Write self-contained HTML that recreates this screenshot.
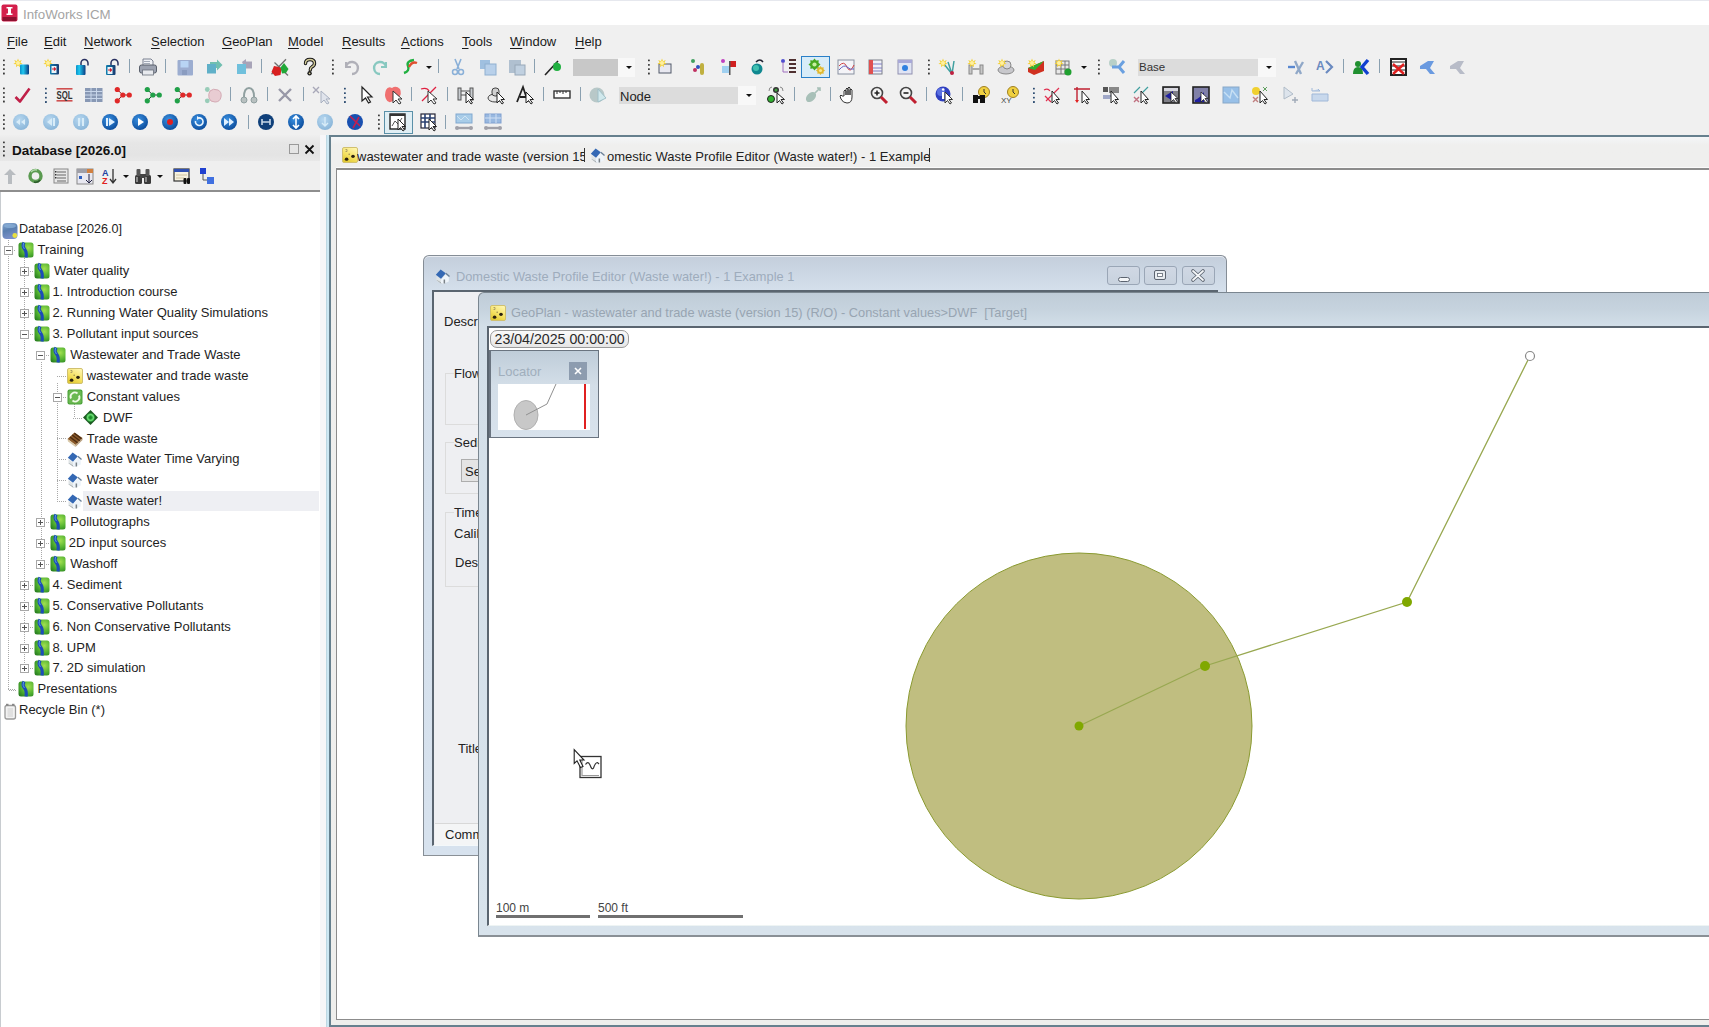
<!DOCTYPE html><html><head><meta charset="utf-8"><style>
html,body{margin:0;padding:0;width:1709px;height:1027px;overflow:hidden;background:#f0f0f0;font-family:"Liberation Sans", sans-serif;}
.t{position:absolute;white-space:nowrap;line-height:1;}
svg{display:block}
</style></head><body>
<svg width="0" height="0" style="position:absolute"><defs><linearGradient id="gcyl" x1="0" x2="1" y1="0" y2="0"><stop offset="0" stop-color="#0a90c8"/><stop offset="0.35" stop-color="#20c8f0"/><stop offset="1" stop-color="#0a3a80"/></linearGradient><linearGradient id="gcyl2" x1="0" x2="1" y1="0" y2="0"><stop offset="0" stop-color="#1080b0"/><stop offset="1" stop-color="#1a3a70"/></linearGradient><radialGradient id="gcirc" cx="0.4" cy="0.35" r="0.7"><stop offset="0" stop-color="#3a90e0"/><stop offset="1" stop-color="#0a4a9a"/></radialGradient><radialGradient id="gcircl" cx="0.4" cy="0.35" r="0.7"><stop offset="0" stop-color="#b8d8f0"/><stop offset="1" stop-color="#88b4d8"/></radialGradient><radialGradient id="gfold" cx="0.65" cy="0.35" r="0.8"><stop offset="0" stop-color="#a0e050"/><stop offset="0.6" stop-color="#50b030"/><stop offset="1" stop-color="#2a8020"/></radialGradient><linearGradient id="ggeo" x1="0.8" y1="0" x2="0.3" y2="1"><stop offset="0" stop-color="#fff6b0"/><stop offset="0.6" stop-color="#f4e060"/><stop offset="1" stop-color="#e0c830"/></linearGradient><linearGradient id="gdb" x1="0" y1="0" x2="0.3" y2="1"><stop offset="0" stop-color="#88a8d0"/><stop offset="0.5" stop-color="#5a7fb0"/><stop offset="1" stop-color="#7a90c8"/></linearGradient></defs></svg>
<div style="position:absolute;left:0px;top:0px;width:1709px;height:25px;background:#ffffff;"></div>
<div style="position:absolute;left:0px;top:0px;width:1709px;height:1px;background:#e6e8ee;"></div>
<svg style="position:absolute;left:1px;top:4px;overflow:visible;" width="17" height="18" viewBox="0 0 17 18"><rect x="0.5" y="0.5" width="16" height="17" rx="2" fill="#d4204c"/><rect x="1.5" y="13" width="14" height="4" fill="#8e1030"/><rect x="7" y="3" width="3" height="8" fill="#fff"/><rect x="5.5" y="3" width="6" height="1.5" fill="#fff"/><rect x="5.5" y="9.5" width="6" height="1.5" fill="#fff"/></svg>
<div class="t" style="left:23px;top:7.5px;font-size:13.3px;color:#a4a4a4;font-weight:400;">InfoWorks ICM</div>
<div class="t" style="left:7px;top:35px;font-size:13px;color:#1a1a1a;"><span style="text-decoration:underline;text-underline-offset:2px;text-decoration-thickness:1px">F</span>ile</div>
<div class="t" style="left:44px;top:35px;font-size:13px;color:#1a1a1a;"><span style="text-decoration:underline;text-underline-offset:2px;text-decoration-thickness:1px">E</span>dit</div>
<div class="t" style="left:84px;top:35px;font-size:13px;color:#1a1a1a;"><span style="text-decoration:underline;text-underline-offset:2px;text-decoration-thickness:1px">N</span>etwork</div>
<div class="t" style="left:151px;top:35px;font-size:13px;color:#1a1a1a;"><span style="text-decoration:underline;text-underline-offset:2px;text-decoration-thickness:1px">S</span>election</div>
<div class="t" style="left:222px;top:35px;font-size:13px;color:#1a1a1a;"><span style="text-decoration:underline;text-underline-offset:2px;text-decoration-thickness:1px">G</span>eoPlan</div>
<div class="t" style="left:288px;top:35px;font-size:13px;color:#1a1a1a;"><span style="text-decoration:underline;text-underline-offset:2px;text-decoration-thickness:1px">M</span>odel</div>
<div class="t" style="left:342px;top:35px;font-size:13px;color:#1a1a1a;"><span style="text-decoration:underline;text-underline-offset:2px;text-decoration-thickness:1px">R</span>esults</div>
<div class="t" style="left:401px;top:35px;font-size:13px;color:#1a1a1a;"><span style="text-decoration:underline;text-underline-offset:2px;text-decoration-thickness:1px">A</span>ctions</div>
<div class="t" style="left:462px;top:35px;font-size:13px;color:#1a1a1a;"><span style="text-decoration:underline;text-underline-offset:2px;text-decoration-thickness:1px">T</span>ools</div>
<div class="t" style="left:510px;top:35px;font-size:13px;color:#1a1a1a;"><span style="text-decoration:underline;text-underline-offset:2px;text-decoration-thickness:1px">W</span>indow</div>
<div class="t" style="left:575px;top:35px;font-size:13px;color:#1a1a1a;"><span style="text-decoration:underline;text-underline-offset:2px;text-decoration-thickness:1px">H</span>elp</div>
<div style="position:absolute;left:801px;top:56px;width:29px;height:22px;background:#d8ecf8;border:1px solid #2a80c8;box-sizing:border-box;"></div>
<svg style="position:absolute;left:1px;top:58px;overflow:visible;" width="18" height="18" viewBox="0 0 18 18"><g fill="#3a3a3a"><rect x="2" y="1.4" width="1.8" height="1.8" rx="0.5"/><rect x="2" y="5.8999999999999995" width="1.8" height="1.8" rx="0.5"/><rect x="2" y="10.2" width="1.8" height="1.8" rx="0.5"/><rect x="2" y="14.6" width="1.8" height="1.8" rx="0.5"/></g></svg>
<svg style="position:absolute;left:13px;top:58px;overflow:visible;" width="18" height="18" viewBox="0 0 18 18"><path d="M5 0.5 L6 3.2 L8.8 2 L7.3 4.6 L9.6 6 L6.8 6.3 L6.9 9.2 L5 7.2 L3.1 9.2 L3.2 6.3 L0.4 6 L2.7 4.6 L1.2 2 L4 3.2z" fill="#f4d030"/><circle cx="5" cy="5" r="2" fill="#fff0a0"/><rect x="7" y="6.5" width="9" height="10" rx="1" fill="url(#gcyl)"/></svg>
<svg style="position:absolute;left:43px;top:58px;overflow:visible;" width="18" height="18" viewBox="0 0 18 18"><path d="M5 0.5 L6 3.2 L8.8 2 L7.3 4.6 L9.6 6 L6.8 6.3 L6.9 9.2 L5 7.2 L3.1 9.2 L3.2 6.3 L0.4 6 L2.7 4.6 L1.2 2 L4 3.2z" fill="#f4d030"/><circle cx="5" cy="5" r="2" fill="#fff0a0"/><rect x="7" y="6" width="9" height="10.5" rx="1" fill="url(#gcyl2)"/><rect x="8.5" y="8" width="5" height="7" fill="#e8f4fa"/><path d="M9 11 h3.5 M11 9.5 l1.5 1.5 l-1.5 1.5" stroke="#d02030" stroke-width="1.2" fill="none"/></svg>
<svg style="position:absolute;left:76px;top:58px;overflow:visible;" width="18" height="18" viewBox="0 0 18 18"><rect x="0" y="7" width="9.5" height="10" rx="1" fill="url(#gcyl)"/><path d="M5 7 V5 a3.5 3.5 0 0 1 7 0 V7.5" fill="none" stroke="#283060" stroke-width="1.5"/></svg>
<svg style="position:absolute;left:106px;top:58px;overflow:visible;" width="18" height="18" viewBox="0 0 18 18"><rect x="0" y="7" width="9.5" height="10" rx="1" fill="url(#gcyl2)"/><rect x="1.5" y="9" width="5" height="7" fill="#e8f4fa"/><path d="M2 12 h3.5 M4 10.5 l1.5 1.5 l-1.5 1.5" stroke="#d02030" stroke-width="1.2" fill="none"/><path d="M5 7 V5 a3.5 3.5 0 0 1 7 0 V7.5" fill="none" stroke="#283060" stroke-width="1.5"/></svg>
<svg style="position:absolute;left:129px;top:58px;overflow:visible;" width="18" height="18" viewBox="0 0 18 18"><rect x="0" y="1" width="1" height="14" fill="#8aa0b0"/></svg>
<svg style="position:absolute;left:139px;top:58px;overflow:visible;" width="18" height="18" viewBox="0 0 18 18"><path d="M4 1 h8 l2 2 v5 h-10z" fill="#f0f2f6" stroke="#7a8090"/><rect x="0.5" y="7" width="17" height="8" rx="2" fill="#9ca2b0" stroke="#5a606c"/><rect x="3.5" y="12" width="11" height="5" fill="#e8eaee" stroke="#6a707c" stroke-width="0.8"/><path d="M5 3.5 h6 M5 5.5 h6" stroke="#9098a8" stroke-width="0.8"/></svg>
<svg style="position:absolute;left:165px;top:58px;overflow:visible;" width="18" height="18" viewBox="0 0 18 18"><rect x="0" y="1" width="1" height="14" fill="#8aa0b0"/></svg>
<svg style="position:absolute;left:177px;top:58px;overflow:visible;" width="18" height="18" viewBox="0 0 18 18"><rect x="0.5" y="2" width="15.5" height="15.5" rx="1" fill="#9cadd0"/><rect x="3.5" y="3" width="8" height="6.5" fill="#b8d4f4"/><rect x="5" y="12" width="5" height="5" fill="#8a9cc0"/></svg>
<svg style="position:absolute;left:207px;top:58px;overflow:visible;" width="18" height="18" viewBox="0 0 18 18"><path d="M3 4 h7 V1.5 l5.5 5.5 l-5.5 5.5 V10 h-7z" fill="#70bfb0"/><rect x="0" y="6" width="9" height="9.5" fill="#60b0c8"/></svg>
<svg style="position:absolute;left:236px;top:58px;overflow:visible;" width="18" height="18" viewBox="0 0 18 18"><path d="M6 4 l4 -3 v2.5 h6 v7 h-6 V13z" fill="#a8a4b8"/><rect x="1" y="6" width="9" height="10" fill="#70c0dc"/></svg>
<svg style="position:absolute;left:261px;top:58px;overflow:visible;" width="18" height="18" viewBox="0 0 18 18"><rect x="0" y="1" width="1" height="14" fill="#8aa0b0"/></svg>
<svg style="position:absolute;left:271px;top:58px;overflow:visible;" width="18" height="18" viewBox="0 0 18 18"><path d="M3.5 4.5 L17 17.5 M15 1.2 L0.5 16.3" stroke="#707070" stroke-width="1.3"/><path d="M0.5 14 L3 8 L8 9 L10.5 11 L9.5 17 L4 18z" fill="#d82020"/><path d="M9.5 9.5 L13 5 L17.5 11 L15 15 L11 15.5z" fill="#20a838"/></svg>
<svg style="position:absolute;left:301px;top:58px;overflow:visible;" width="18" height="18" viewBox="0 0 18 18"><path d="M4.5 5.5 q0 -4 4.5 -4 q4.5 0 4.5 3.8 q0 2.4 -2.6 3.6 q-1.6 .8 -1.6 3" fill="none" stroke="#1a1a1a" stroke-width="3.4" stroke-linecap="round"/><path d="M4.5 5.5 q0 -4 4.5 -4 q4.5 0 4.5 3.8 q0 2.4 -2.6 3.6 q-1.6 .8 -1.6 3" fill="none" stroke="#d4cc98" stroke-width="1.4" stroke-linecap="round"/><circle cx="8.6" cy="15.3" r="2.2" fill="#1a1a1a"/><circle cx="8.6" cy="15.3" r="0.9" fill="#d4cc98"/></svg>
<svg style="position:absolute;left:330px;top:58px;overflow:visible;" width="18" height="18" viewBox="0 0 18 18"><g fill="#3a3a3a"><rect x="2" y="1.4" width="1.8" height="1.8" rx="0.5"/><rect x="2" y="5.8999999999999995" width="1.8" height="1.8" rx="0.5"/><rect x="2" y="10.2" width="1.8" height="1.8" rx="0.5"/><rect x="2" y="14.6" width="1.8" height="1.8" rx="0.5"/></g></svg>
<svg style="position:absolute;left:342px;top:58px;overflow:visible;" width="18" height="18" viewBox="0 0 18 18"><path d="M4 4 v5 h5" fill="none" stroke="#b0b0b8" stroke-width="2"/><path d="M4 9 a6 6 0 1 1 6 7" fill="none" stroke="#b0b0b8" stroke-width="2.4"/></svg>
<svg style="position:absolute;left:372px;top:58px;overflow:visible;" width="18" height="18" viewBox="0 0 18 18"><path d="M14 4 v5 h-5" fill="none" stroke="#88c8c0" stroke-width="2"/><path d="M14 9 a6 6 0 1 0 -6 7" fill="none" stroke="#88c8c0" stroke-width="2.4"/></svg>
<svg style="position:absolute;left:401px;top:58px;overflow:visible;" width="18" height="18" viewBox="0 0 18 18"><path d="M3 15 q6 -2 4 -7 q-2 -5 6 -6" fill="none" stroke="#20b040" stroke-width="2.4"/><path d="M8 9 q3 -6 8 -4" fill="none" stroke="#e05030" stroke-width="2.4"/></svg>
<svg style="position:absolute;left:424px;top:58px;overflow:visible;" width="18" height="18" viewBox="0 0 18 18"><path d="M2 8 h6 l-3 3z" fill="#111"/></svg>
<svg style="position:absolute;left:438px;top:58px;overflow:visible;" width="18" height="18" viewBox="0 0 18 18"><rect x="0" y="1" width="1" height="14" fill="#8aa0b0"/></svg>
<svg style="position:absolute;left:449px;top:58px;overflow:visible;" width="18" height="18" viewBox="0 0 18 18"><path d="M6 1 l4 10 M12 1 l-4 10" stroke="#8ab0d8" stroke-width="1.6"/><circle cx="6" cy="14" r="2.5" fill="none" stroke="#8ab0d8" stroke-width="1.5"/><circle cx="12" cy="14" r="2.5" fill="none" stroke="#8ab0d8" stroke-width="1.5"/></svg>
<svg style="position:absolute;left:479px;top:58px;overflow:visible;" width="18" height="18" viewBox="0 0 18 18"><rect x="1" y="2" width="10" height="9" fill="#a0c0e0"/><rect x="6" y="6" width="11" height="11" fill="#b8d0ea" stroke="#90b0d0"/></svg>
<svg style="position:absolute;left:508px;top:58px;overflow:visible;" width="18" height="18" viewBox="0 0 18 18"><rect x="1" y="2" width="12" height="13" fill="#b0c0d0"/><rect x="7" y="7" width="10" height="10" fill="#c0d0e0" stroke="#98a8b8"/></svg>
<svg style="position:absolute;left:534px;top:58px;overflow:visible;" width="18" height="18" viewBox="0 0 18 18"><rect x="0" y="1" width="1" height="14" fill="#8aa0b0"/></svg>
<svg style="position:absolute;left:544px;top:58px;overflow:visible;" width="18" height="18" viewBox="0 0 18 18"><path d="M1 17 L14 3" stroke="#222" stroke-width="1.6"/><circle cx="13" cy="9" r="4" fill="#20b040"/><path d="M9 6 l4 -2 l3 3z" fill="#20b040"/></svg>
<svg style="position:absolute;left:646px;top:58px;overflow:visible;" width="18" height="18" viewBox="0 0 18 18"><g fill="#3a3a3a"><rect x="2" y="1.4" width="1.8" height="1.8" rx="0.5"/><rect x="2" y="5.8999999999999995" width="1.8" height="1.8" rx="0.5"/><rect x="2" y="10.2" width="1.8" height="1.8" rx="0.5"/><rect x="2" y="14.6" width="1.8" height="1.8" rx="0.5"/></g></svg>
<svg style="position:absolute;left:657px;top:58px;overflow:visible;" width="18" height="18" viewBox="0 0 18 18"><rect x="2" y="6" width="12" height="9" fill="#e8e8f0" stroke="#505868"/><path d="M5 0.5 L6 3.2 L8.8 2 L7.3 4.6 L9.6 6 L6.8 6.3 L6.9 9.2 L5 7.2 L3.1 9.2 L3.2 6.3 L0.4 6 L2.7 4.6 L1.2 2 L4 3.2z" fill="#f4d030"/><circle cx="5" cy="5" r="2" fill="#fff0a0"/></svg>
<svg style="position:absolute;left:689px;top:58px;overflow:visible;" width="18" height="18" viewBox="0 0 18 18"><circle cx="4" cy="3" r="2" fill="#40a060"/><circle cx="6" cy="12" r="2" fill="#c03060"/><circle cx="9" cy="9" r="2" fill="#3050c0"/><rect x="11" y="5" width="4" height="12" rx="2" fill="#c0b040"/></svg>
<svg style="position:absolute;left:719px;top:58px;overflow:visible;" width="18" height="18" viewBox="0 0 18 18"><circle cx="4" cy="3" r="2" fill="#c040c0"/><rect x="3" y="8" width="7" height="7" fill="#a0d0f0"/><path d="M11 3 h6 v6 h-6z" fill="#d02020"/><rect x="10" y="3" width="1.5" height="14" fill="#555"/></svg>
<svg style="position:absolute;left:747px;top:58px;overflow:visible;" width="18" height="18" viewBox="0 0 18 18"><circle cx="10" cy="11" r="5.5" fill="#108890"/><circle cx="9" cy="10" r="3" fill="#40c0b0"/><path d="M9 4 q4 -4 7 0" fill="none" stroke="#223" stroke-width="1.6"/></svg>
<svg style="position:absolute;left:779px;top:58px;overflow:visible;" width="18" height="18" viewBox="0 0 18 18"><circle cx="4" cy="3" r="2" fill="#5050d0"/><path d="M4 4 v10 h5" stroke="#a070c0" fill="none"/><path d="M10 2 h7 M10 6 h7 M10 10 h7 M10 14 h7" stroke="#503030" stroke-width="2"/></svg>
<svg style="position:absolute;left:808px;top:58px;overflow:visible;" width="18" height="18" viewBox="0 0 18 18"><polygon points="12.50,6.50 10.49,8.15 10.74,10.74 8.15,10.49 6.50,12.50 4.85,10.49 2.26,10.74 2.51,8.15 0.50,6.50 2.51,4.85 2.26,2.26 4.85,2.51 6.50,0.50 8.15,2.51 10.74,2.26 10.49,4.85" fill="#48a820"/><circle cx="6.5" cy="6.5" r="2.10" fill="#c8f0a0"/><polygon points="17.00,12.50 15.49,13.74 15.68,15.68 13.74,15.49 12.50,17.00 11.26,15.49 9.32,15.68 9.51,13.74 8.00,12.50 9.51,11.26 9.32,9.32 11.26,9.51 12.50,8.00 13.74,9.51 15.68,9.32 15.49,11.26" fill="#e0b830"/><circle cx="12.5" cy="12.5" r="1.57" fill="#f8e890"/></svg>
<svg style="position:absolute;left:837px;top:58px;overflow:visible;" width="18" height="18" viewBox="0 0 18 18"><rect x="1" y="2" width="16" height="14" fill="#f4f4f8" stroke="#8890a0"/><path d="M2 8 q5 -6 8 1 t7 -2" stroke="#d04040" fill="none"/><path d="M2 12 q5 -6 8 -3 t7 2" stroke="#6060c0" fill="none"/></svg>
<svg style="position:absolute;left:867px;top:58px;overflow:visible;" width="18" height="18" viewBox="0 0 18 18"><rect x="2" y="2" width="13" height="14" fill="#f0f0f8" stroke="#7a7f8a"/><rect x="2" y="2" width="4" height="14" fill="#e05050"/><path d="M6 6 h9 M6 10 h9 M6 13 h9" stroke="#8080c0"/></svg>
<svg style="position:absolute;left:896px;top:58px;overflow:visible;" width="18" height="18" viewBox="0 0 18 18"><rect x="2" y="2" width="14" height="14" fill="#e0e4f4" stroke="#9090b0"/><rect x="2" y="2" width="14" height="3" fill="#a8a8d8"/><circle cx="9" cy="10" r="3" fill="#3080e0"/></svg>
<svg style="position:absolute;left:926px;top:58px;overflow:visible;" width="18" height="18" viewBox="0 0 18 18"><g fill="#3a3a3a"><rect x="2" y="1.4" width="1.8" height="1.8" rx="0.5"/><rect x="2" y="5.8999999999999995" width="1.8" height="1.8" rx="0.5"/><rect x="2" y="10.2" width="1.8" height="1.8" rx="0.5"/><rect x="2" y="14.6" width="1.8" height="1.8" rx="0.5"/></g></svg>
<svg style="position:absolute;left:938px;top:58px;overflow:visible;" width="18" height="18" viewBox="0 0 18 18"><path d="M6 6 L14 16 M10 4 L14 16 M16 3 L14 16" stroke="#40a0a0" stroke-width="1.5"/><circle cx="14" cy="15" r="2" fill="#c02040"/><path d="M5 0.5 L6 3.2 L8.8 2 L7.3 4.6 L9.6 6 L6.8 6.3 L6.9 9.2 L5 7.2 L3.1 9.2 L3.2 6.3 L0.4 6 L2.7 4.6 L1.2 2 L4 3.2z" fill="#f4d030"/><circle cx="5" cy="5" r="2" fill="#fff0a0"/></svg>
<svg style="position:absolute;left:967px;top:58px;overflow:visible;" width="18" height="18" viewBox="0 0 18 18"><rect x="2" y="7" width="3" height="9" fill="#c8c8c8" stroke="#888"/><rect x="13" y="7" width="3" height="9" fill="#c8c8c8" stroke="#888"/><rect x="4" y="10" width="10" height="2" fill="#aaa"/><path d="M5 0.5 L6 3.2 L8.8 2 L7.3 4.6 L9.6 6 L6.8 6.3 L6.9 9.2 L5 7.2 L3.1 9.2 L3.2 6.3 L0.4 6 L2.7 4.6 L1.2 2 L4 3.2z" fill="#f4d030"/><circle cx="5" cy="5" r="2" fill="#fff0a0"/></svg>
<svg style="position:absolute;left:997px;top:58px;overflow:visible;" width="18" height="18" viewBox="0 0 18 18"><ellipse cx="9" cy="12" rx="8" ry="4" fill="#c8c8cc" stroke="#888"/><ellipse cx="10" cy="7" rx="4" ry="4" fill="#d8d8dc" stroke="#888"/><path d="M5 0.5 L6 3.2 L8.8 2 L7.3 4.6 L9.6 6 L6.8 6.3 L6.9 9.2 L5 7.2 L3.1 9.2 L3.2 6.3 L0.4 6 L2.7 4.6 L1.2 2 L4 3.2z" fill="#f4d030"/><circle cx="5" cy="5" r="2" fill="#fff0a0"/></svg>
<svg style="position:absolute;left:1027px;top:58px;overflow:visible;" width="18" height="18" viewBox="0 0 18 18"><path d="M1 10 L17 3 L17 13 L7 17 L1 14z" fill="#d03020"/><path d="M1 10 L17 3 L8 12z" fill="#30b030"/><path d="M5 0.5 L6 3.2 L8.8 2 L7.3 4.6 L9.6 6 L6.8 6.3 L6.9 9.2 L5 7.2 L3.1 9.2 L3.2 6.3 L0.4 6 L2.7 4.6 L1.2 2 L4 3.2z" fill="#f4d030"/><circle cx="5" cy="5" r="2" fill="#fff0a0"/></svg>
<svg style="position:absolute;left:1054px;top:58px;overflow:visible;" width="18" height="18" viewBox="0 0 18 18"><rect x="2" y="3" width="13" height="13" fill="#e8e8e8" stroke="#777"/><path d="M2 7 h13 M2 11 h13 M7 3 v13 M11 3 v13" stroke="#777"/><circle cx="14" cy="14" r="3.5" fill="#20a030"/><path d="M5 0.5 L6 3.2 L8.8 2 L7.3 4.6 L9.6 6 L6.8 6.3 L6.9 9.2 L5 7.2 L3.1 9.2 L3.2 6.3 L0.4 6 L2.7 4.6 L1.2 2 L4 3.2z" fill="#f4d030"/><circle cx="5" cy="5" r="2" fill="#fff0a0"/></svg>
<svg style="position:absolute;left:1079px;top:58px;overflow:visible;" width="18" height="18" viewBox="0 0 18 18"><path d="M2 8 h6 l-3 3z" fill="#111"/></svg>
<svg style="position:absolute;left:1096px;top:58px;overflow:visible;" width="18" height="18" viewBox="0 0 18 18"><g fill="#3a3a3a"><rect x="2" y="1.4" width="1.8" height="1.8" rx="0.5"/><rect x="2" y="5.8999999999999995" width="1.8" height="1.8" rx="0.5"/><rect x="2" y="10.2" width="1.8" height="1.8" rx="0.5"/><rect x="2" y="14.6" width="1.8" height="1.8" rx="0.5"/></g></svg>
<svg style="position:absolute;left:1108px;top:58px;overflow:visible;" width="18" height="18" viewBox="0 0 18 18"><circle cx="5" cy="5" r="4" fill="#b8d0c8"/><path d="M4 9 L11 9 L16 3 M11 9 L16 15" stroke="#6aa0e0" stroke-width="3" fill="none"/></svg>
<svg style="position:absolute;left:1287px;top:58px;overflow:visible;" width="18" height="18" viewBox="0 0 18 18"><path d="M1 9 h7" stroke="#5a88d0" stroke-width="2.4"/><path d="M8 3 l6 13 M9 16 l7 -12" stroke="#90a8c8" stroke-width="2.4"/></svg>
<svg style="position:absolute;left:1316px;top:58px;overflow:visible;" width="18" height="18" viewBox="0 0 18 18"><text x="0" y="12" font-size="12" font-weight="700" fill="#6a8ac0" font-family="Liberation Sans">A</text><path d="M10 3 l6 6 l-6 6" stroke="#6a8ac0" stroke-width="2.2" fill="none"/></svg>
<svg style="position:absolute;left:1343px;top:58px;overflow:visible;" width="18" height="18" viewBox="0 0 18 18"><rect x="0" y="1" width="1" height="14" fill="#8aa0b0"/></svg>
<svg style="position:absolute;left:1352px;top:58px;overflow:visible;" width="18" height="18" viewBox="0 0 18 18"><circle cx="6" cy="6" r="3" fill="#209030"/><path d="M1 16 q0 -7 5 -7 q5 0 5 7z" fill="#209030"/><path d="M16 2 l-6 7 l6 7" stroke="#1040d0" stroke-width="3.4" fill="none"/></svg>
<svg style="position:absolute;left:1379px;top:58px;overflow:visible;" width="18" height="18" viewBox="0 0 18 18"><rect x="0" y="1" width="1" height="14" fill="#8aa0b0"/></svg>
<svg style="position:absolute;left:1390px;top:58px;overflow:visible;" width="18" height="18" viewBox="0 0 18 18"><rect x="1" y="1" width="15" height="16" fill="#fff" stroke="#222" stroke-width="2"/><path d="M2 4 h13 M2 8 h13 M2 12 h13" stroke="#222"/><path d="M3 6 L14 16 M14 6 L3 16" stroke="#e02020" stroke-width="2.4"/></svg>
<svg style="position:absolute;left:1419px;top:58px;overflow:visible;" width="18" height="18" viewBox="0 0 18 18"><path d="M1 8 L9 3 L15 3 L11 10 L16 16 L11 16 L7 11 L1 11z" fill="#6a9ae0"/></svg>
<svg style="position:absolute;left:1449px;top:58px;overflow:visible;" width="18" height="18" viewBox="0 0 18 18"><path d="M1 8 L9 3 L15 3 L11 10 L16 16 L11 16 L7 11 L1 11z" fill="#b8bcc8"/></svg>
<div style="position:absolute;left:573px;top:59px;width:45px;height:17px;background:#c8c8c8;"></div>
<div style="position:absolute;left:618px;top:58px;width:17px;height:19px;background:#f8f8f8;"></div>
<svg style="position:absolute;left:624px;top:58px;overflow:visible;" width="18" height="18" viewBox="0 0 18 18"><path d="M2 8 h6 l-3 3z" fill="#111"/></svg>
<div style="position:absolute;left:1138px;top:59px;width:120px;height:17px;background:#dcdcdc;"></div>
<div style="position:absolute;left:1258px;top:58px;width:18px;height:19px;background:#f8f8f8;"></div>
<svg style="position:absolute;left:1264px;top:58px;overflow:visible;" width="18" height="18" viewBox="0 0 18 18"><path d="M2 8 h6 l-3 3z" fill="#111"/></svg>
<div class="t" style="left:1139px;top:62px;font-size:11.5px;color:#333;font-weight:400;">Base</div>
<svg style="position:absolute;left:1px;top:86px;overflow:visible;" width="18" height="18" viewBox="0 0 18 18"><g fill="#3a3a3a"><rect x="2" y="1.4" width="1.8" height="1.8" rx="0.5"/><rect x="2" y="5.8999999999999995" width="1.8" height="1.8" rx="0.5"/><rect x="2" y="10.2" width="1.8" height="1.8" rx="0.5"/><rect x="2" y="14.6" width="1.8" height="1.8" rx="0.5"/></g></svg>
<svg style="position:absolute;left:14px;top:86px;overflow:visible;" width="18" height="18" viewBox="0 0 18 18"><path d="M1.5 11 L6 15.5 L15.5 2.5" stroke="#c02048" stroke-width="2.6" fill="none" stroke-linejoin="round"/></svg>
<svg style="position:absolute;left:43px;top:86px;overflow:visible;" width="18" height="18" viewBox="0 0 18 18"><g fill="#2a4a70"><rect x="2" y="1.8000000000000003" width="1.8" height="1.8" rx="0.5"/><rect x="2" y="6.3" width="1.8" height="1.8" rx="0.5"/><rect x="2" y="10.7" width="1.8" height="1.8" rx="0.5"/><rect x="2" y="15.1" width="1.8" height="1.8" rx="0.5"/></g></svg>
<svg style="position:absolute;left:56px;top:86px;overflow:visible;" width="18" height="18" viewBox="0 0 18 18"><rect x="0.5" y="2" width="16" height="1.6" fill="#d05050"/><rect x="0.5" y="14" width="16" height="1.6" fill="#d05050"/><text x="0.5" y="12.5" font-size="10.5" font-weight="700" fill="#333" font-family="Liberation Sans" textLength="16" lengthAdjust="spacingAndGlyphs">SQL</text></svg>
<svg style="position:absolute;left:85px;top:86px;overflow:visible;" width="18" height="18" viewBox="0 0 18 18"><rect x="0" y="2" width="17.5" height="14" fill="#8898b4"/><path d="M6 2 v14 M11.5 2 v14 M0 5.5 h17.5 M0 9 h17.5 M0 12.5 h17.5" stroke="#c8d6ea" stroke-width="1"/></svg>
<svg style="position:absolute;left:114px;top:86px;overflow:visible;" width="18" height="18" viewBox="0 0 18 18"><path d="M3.3 3.5 L8.8 9 L3.3 14.8 M8.8 9 H15.3" stroke="#902020" stroke-width="1" fill="none"/><circle cx="3.3" cy="3.5" r="2.6" fill="#e02828"/><circle cx="3.3" cy="14.8" r="2.6" fill="#e02828"/><circle cx="8.8" cy="9" r="2.6" fill="#e02828"/><circle cx="15.3" cy="9" r="2.6" fill="#e02828"/></svg>
<svg style="position:absolute;left:144px;top:86px;overflow:visible;" width="18" height="18" viewBox="0 0 18 18"><path d="M3.3 3.5 L8.8 9 L3.3 14.8 M8.8 9 H15.3" stroke="#204030" stroke-width="1" fill="none"/><circle cx="3.3" cy="3.5" r="2.6" fill="#20a048"/><circle cx="3.3" cy="14.8" r="2.6" fill="#20a048"/><circle cx="8.8" cy="9" r="2.6" fill="#20a048"/><circle cx="15.3" cy="9" r="2.6" fill="#20a048"/></svg>
<svg style="position:absolute;left:174px;top:86px;overflow:visible;" width="18" height="18" viewBox="0 0 18 18"><path d="M3.3 3.5 L8.8 9 L3.3 14.8 M8.8 9 H15.3" stroke="#603030" stroke-width="1" fill="none"/><circle cx="3.3" cy="3.5" r="2.6" fill="#20a048"/><circle cx="3.3" cy="14.8" r="2.6" fill="#20a048"/><circle cx="8.8" cy="9" r="2.6" fill="#e02828"/><circle cx="15.3" cy="9" r="2.6" fill="#e02828"/></svg>
<svg style="position:absolute;left:204px;top:86px;overflow:visible;" width="18" height="18" viewBox="0 0 18 18"><path d="M6 5 q3 -3 8 -1 q4 2 3 7 q-1 5 -6 5 q-5 0 -6 -4 q-1 -4 1 -7z" fill="#e8ccd2" stroke="#d4aab4"/><circle cx="3.3" cy="3.5" r="2.4" fill="#98ccb8"/><circle cx="3.3" cy="14.8" r="2.4" fill="#98ccb8"/></svg>
<svg style="position:absolute;left:230px;top:86px;overflow:visible;" width="18" height="18" viewBox="0 0 18 18"><rect x="0" y="1" width="1" height="14" fill="#8aa0b0"/></svg>
<svg style="position:absolute;left:240px;top:86px;overflow:visible;" width="18" height="18" viewBox="0 0 18 18"><circle cx="4" cy="14" r="3" fill="#b8c0c0" stroke="#90a0a0"/><circle cx="14" cy="14" r="3" fill="#b8c0c0" stroke="#90a0a0"/><path d="M4 11 q0 -9 5 -9 q5 0 5 9" fill="none" stroke="#90a0a0" stroke-width="2"/></svg>
<svg style="position:absolute;left:267px;top:86px;overflow:visible;" width="18" height="18" viewBox="0 0 18 18"><rect x="0" y="1" width="1" height="14" fill="#8aa0b0"/></svg>
<svg style="position:absolute;left:276px;top:86px;overflow:visible;" width="18" height="18" viewBox="0 0 18 18"><path d="M3 3 L15 15 M15 3 L3 15" stroke="#9898a8" stroke-width="2.4"/></svg>
<svg style="position:absolute;left:303px;top:86px;overflow:visible;" width="18" height="18" viewBox="0 0 18 18"><rect x="0" y="1" width="1" height="14" fill="#8aa0b0"/></svg>
<svg style="position:absolute;left:312px;top:86px;overflow:visible;" width="18" height="18" viewBox="0 0 18 18"><path d="M1 1 L7 7 M7 1 L1 7" stroke="#a8a8b8" stroke-width="1.4"/><path d="M9 5 L9 17 L12 14 L15 18 L17 17 L14 13 L18 13z" fill="#e0e4ec" stroke="#a8b0c0"/></svg>
<svg style="position:absolute;left:342px;top:86px;overflow:visible;" width="18" height="18" viewBox="0 0 18 18"><g fill="#2a4a70"><rect x="2" y="1.8000000000000003" width="1.8" height="1.8" rx="0.5"/><rect x="2" y="6.3" width="1.8" height="1.8" rx="0.5"/><rect x="2" y="10.7" width="1.8" height="1.8" rx="0.5"/><rect x="2" y="15.1" width="1.8" height="1.8" rx="0.5"/></g></svg>
<svg style="position:absolute;left:359px;top:86px;overflow:visible;" width="18" height="18" viewBox="0 0 18 18"><path d="M3 1 L3 15 L6.5 12 L9.5 17 L11.5 16 L8.5 11 L13 11z" fill="#fff" stroke="#222" stroke-width="1.2"/></svg>
<svg style="position:absolute;left:385px;top:86px;overflow:visible;" width="18" height="18" viewBox="0 0 18 18"><path d="M1 4 q2 -4 6 -2 q4 -3 8 1 q2 5 -1 8 q-2 5 -6 4 q-5 3 -7 -2 q-2 -4 0 -9z" fill="#f07070"/><path d="M8 5 L8 17 L11 14 L14 18 L16 17 L13 13 L17 13z" fill="#fff" stroke="#333" stroke-width="1"/></svg>
<svg style="position:absolute;left:411px;top:86px;overflow:visible;" width="18" height="18" viewBox="0 0 18 18"><rect x="0" y="1" width="1" height="14" fill="#8aa0b0"/></svg>
<svg style="position:absolute;left:420px;top:86px;overflow:visible;" width="18" height="18" viewBox="0 0 18 18"><path d="M1 3 q6 -2 8 2 M16 1 l-7 7 M9 8 L2 15" stroke="#e02040" stroke-width="1.3" fill="none"/><path d="M8 5 L8 17 L11 14 L14 18 L16 17 L13 13 L17 13z" fill="#fff" stroke="#333" stroke-width="1"/></svg>
<svg style="position:absolute;left:447px;top:86px;overflow:visible;" width="18" height="18" viewBox="0 0 18 18"><rect x="0" y="1" width="1" height="14" fill="#8aa0b0"/></svg>
<svg style="position:absolute;left:457px;top:86px;overflow:visible;" width="18" height="18" viewBox="0 0 18 18"><rect x="1" y="2" width="3" height="12" fill="#c8ccd0" stroke="#555"/><rect x="13" y="2" width="3" height="12" fill="#c8ccd0" stroke="#555"/><path d="M4 5 h9 M4 9 h9" stroke="#555"/><path d="M9 6 L9 17 L11.5 14.5 L14 18 L15.5 17 L13 13.5 L16.5 13.5z" fill="#fff" stroke="#222" stroke-width="1"/></svg>
<svg style="position:absolute;left:487px;top:86px;overflow:visible;" width="18" height="18" viewBox="0 0 18 18"><ellipse cx="8" cy="12" rx="7" ry="4" fill="#e8e8e8" stroke="#444"/><rect x="5" y="2" width="7" height="8" rx="3" fill="#d0d0d0" stroke="#444"/><path d="M10 6 L10 17 L12.5 14.5 L15 18 L16.5 17 L14 13.5 L17.5 13.5z" fill="#fff" stroke="#222" stroke-width="1"/></svg>
<svg style="position:absolute;left:516px;top:86px;overflow:visible;" width="18" height="18" viewBox="0 0 18 18"><path d="M1 16 L7 1 L12 16 M4 11 h6" stroke="#222" stroke-width="1.8" fill="none"/><path d="M10 6 L10 17 L12.5 14.5 L15 18 L16.5 17 L14 13.5 L17.5 13.5z" fill="#fff" stroke="#222" stroke-width="1"/></svg>
<svg style="position:absolute;left:543px;top:86px;overflow:visible;" width="18" height="18" viewBox="0 0 18 18"><rect x="0" y="1" width="1" height="14" fill="#8aa0b0"/></svg>
<svg style="position:absolute;left:553px;top:86px;overflow:visible;" width="18" height="18" viewBox="0 0 18 18"><rect x="1" y="5" width="16" height="7" fill="#fff" stroke="#333" stroke-width="1.4"/><path d="M4 5 v3 M7 5 v2 M10 5 v3 M13 5 v2" stroke="#333"/></svg>
<svg style="position:absolute;left:580px;top:86px;overflow:visible;" width="18" height="18" viewBox="0 0 18 18"><rect x="0" y="1" width="1" height="14" fill="#8aa0b0"/></svg>
<svg style="position:absolute;left:589px;top:86px;overflow:visible;" width="18" height="18" viewBox="0 0 18 18"><circle cx="8" cy="9" r="7.5" fill="#b8c8c8"/><path d="M9 3 L17 12 L9 16z" fill="#d0e8ec" stroke="#a0c0c8"/></svg>
<svg style="position:absolute;left:767px;top:86px;overflow:visible;" width="18" height="18" viewBox="0 0 18 18"><path d="M2 5 q0 -4 3 -4 M16 5 q0 -4 -3 -4" stroke="#888" fill="none"/><circle cx="9" cy="4" r="3" fill="#333"/><circle cx="9" cy="4" r="1.5" fill="#40a040"/><circle cx="4" cy="13" r="3.5" fill="#30b030" stroke="#222"/><path d="M10 7 L10 17 L12.5 14.5 L15 18 L16.5 17 L14 13.5 L17.5 13.5z" fill="#fff" stroke="#222" stroke-width="1"/></svg>
<svg style="position:absolute;left:794px;top:86px;overflow:visible;" width="18" height="18" viewBox="0 0 18 18"><rect x="0" y="1" width="1" height="14" fill="#8aa0b0"/></svg>
<svg style="position:absolute;left:804px;top:86px;overflow:visible;" width="18" height="18" viewBox="0 0 18 18"><ellipse cx="7" cy="11" rx="4" ry="6" transform="rotate(45 7 11)" fill="#a8c0b8"/><path d="M11 7 L16 2 M13 2 h3 v3" stroke="#a8c0b8" stroke-width="1.6" fill="none"/></svg>
<svg style="position:absolute;left:830px;top:86px;overflow:visible;" width="18" height="18" viewBox="0 0 18 18"><rect x="0" y="1" width="1" height="14" fill="#8aa0b0"/></svg>
<svg style="position:absolute;left:840px;top:86px;overflow:visible;" width="18" height="18" viewBox="0 0 18 18"><path d="M4 10 V5 q1 -2 2 0 V9 V3 q1 -2 2 0 V9 V2 q1 -2 2 0 V9 V4 q1 -2 2 0 V11 q0 6 -5 6 q-4 0 -6 -4 l-1 -3 q1 -2 2 0z" fill="#fff" stroke="#333" stroke-width="1"/></svg>
<svg style="position:absolute;left:870px;top:86px;overflow:visible;" width="18" height="18" viewBox="0 0 18 18"><circle cx="7" cy="7" r="5.5" fill="#f4f4f4" stroke="#444" stroke-width="1.6"/><path d="M4.5 7 h5 M7 4.5 v5" stroke="#222" stroke-width="1.6"/><path d="M11 11 L17 17" stroke="#c02030" stroke-width="3"/></svg>
<svg style="position:absolute;left:899px;top:86px;overflow:visible;" width="18" height="18" viewBox="0 0 18 18"><circle cx="7" cy="7" r="5.5" fill="#f4f4f4" stroke="#444" stroke-width="1.6"/><path d="M4.5 7 h5" stroke="#222" stroke-width="1.6"/><path d="M11 11 L17 17" stroke="#c02030" stroke-width="3"/></svg>
<svg style="position:absolute;left:926px;top:86px;overflow:visible;" width="18" height="18" viewBox="0 0 18 18"><rect x="0" y="1" width="1" height="14" fill="#8aa0b0"/></svg>
<svg style="position:absolute;left:935px;top:86px;overflow:visible;" width="18" height="18" viewBox="0 0 18 18"><circle cx="8" cy="8" r="7.5" fill="#3040c0"/><circle cx="6" cy="6" r="4" fill="#5a70e0"/><rect x="7" y="6" width="2.4" height="7" fill="#fff"/><circle cx="8.2" cy="3.5" r="1.3" fill="#fff"/><path d="M10 6 L10 17 L12.5 14.5 L15 18 L16.5 17 L14 13.5 L17.5 13.5z" fill="#fff" stroke="#333" stroke-width="1"/></svg>
<svg style="position:absolute;left:962px;top:86px;overflow:visible;" width="18" height="18" viewBox="0 0 18 18"><rect x="0" y="1" width="1" height="14" fill="#8aa0b0"/></svg>
<svg style="position:absolute;left:972px;top:86px;overflow:visible;" width="18" height="18" viewBox="0 0 18 18"><circle cx="12" cy="6" r="5.5" fill="#f0d040" stroke="#a08020"/><path d="M12 3 v3 l2 2" stroke="#333" fill="none"/><rect x="1" y="9" width="5" height="8" fill="#111"/><rect x="8" y="9" width="5" height="8" fill="#111"/><rect x="4" y="10" width="6" height="3" fill="#111"/></svg>
<svg style="position:absolute;left:1001px;top:86px;overflow:visible;" width="18" height="18" viewBox="0 0 18 18"><circle cx="12" cy="6" r="5.5" fill="#f0d040" stroke="#a08020"/><path d="M12 3 v3 l2 2" stroke="#333" fill="none"/><text x="0" y="17" font-size="8" fill="#444" font-family="Liberation Sans">XY</text></svg>
<svg style="position:absolute;left:1031px;top:86px;overflow:visible;" width="18" height="18" viewBox="0 0 18 18"><g fill="#2a4a70"><rect x="2" y="1.8000000000000003" width="1.8" height="1.8" rx="0.5"/><rect x="2" y="6.3" width="1.8" height="1.8" rx="0.5"/><rect x="2" y="10.7" width="1.8" height="1.8" rx="0.5"/><rect x="2" y="15.1" width="1.8" height="1.8" rx="0.5"/></g></svg>
<svg style="position:absolute;left:1043px;top:86px;overflow:visible;" width="18" height="18" viewBox="0 0 18 18"><path d="M1 4 q4 -2 6 1 M16 2 L3 15" stroke="#e03050" stroke-width="1.2" fill="none"/><path d="M2 10 L8 16" stroke="#e03050" stroke-width="1.2"/><path d="M9 5 L9 17 L11.5 14.5 L14 18 L15.5 17 L13 13.5 L16.5 13.5z" fill="#fff" stroke="#222" stroke-width="1"/></svg>
<svg style="position:absolute;left:1073px;top:86px;overflow:visible;" width="18" height="18" viewBox="0 0 18 18"><path d="M1 3 h16 M4 1 v14" stroke="#c02030" stroke-width="1.4"/><path d="M2 14 l2 3 l2 -3z" fill="#e02020"/><path d="M9 5 L9 17 L11.5 14.5 L14 18 L15.5 17 L13 13.5 L16.5 13.5z" fill="#fff" stroke="#222" stroke-width="1"/></svg>
<svg style="position:absolute;left:1102px;top:86px;overflow:visible;" width="18" height="18" viewBox="0 0 18 18"><rect x="1" y="1" width="5" height="5" fill="#555"/><rect x="7" y="1" width="10" height="6" fill="#888"/><path d="M1 10 h9 M1 12 h7" stroke="#5060a0"/><path d="M9 5 L9 17 L11.5 14.5 L14 18 L15.5 17 L13 13.5 L16.5 13.5z" fill="#fff" stroke="#222" stroke-width="1"/></svg>
<svg style="position:absolute;left:1132px;top:86px;overflow:visible;" width="18" height="18" viewBox="0 0 18 18"><path d="M2 7 L8 1 M16 1 L10 7" stroke="#40a0a0" stroke-width="1.2"/><path d="M2 11 L7 16 M7 11 L2 16" stroke="#c07080" stroke-width="1.4"/><path d="M9 5 L9 17 L11.5 14.5 L14 18 L15.5 17 L13 13.5 L16.5 13.5z" fill="#fff" stroke="#222" stroke-width="1"/></svg>
<svg style="position:absolute;left:1162px;top:86px;overflow:visible;" width="18" height="18" viewBox="0 0 18 18"><rect x="1" y="1" width="16" height="16" fill="#808088" stroke="#222" stroke-width="1.6"/><rect x="2" y="2" width="14" height="3" fill="#d8d8e0"/><path d="M3 10 L11 5 L11 15z" fill="#2020a0"/><path d="M9 6 L9 16 L11.5 13.5 L14 17 L15.5 16 L13 12.5 L16 12.5z" fill="#fff" stroke="#222" stroke-width="0.8"/></svg>
<svg style="position:absolute;left:1192px;top:86px;overflow:visible;" width="18" height="18" viewBox="0 0 18 18"><rect x="1" y="1" width="16" height="16" fill="#8080a8" stroke="#222" stroke-width="1.6"/><path d="M3 14 q5 -2 9 -8 V16 H3z" fill="#2020a0"/><path d="M9 6 L9 16 L11.5 13.5 L14 17 L15.5 16 L13 12.5 L16 12.5z" fill="#fff" stroke="#222" stroke-width="0.8"/></svg>
<svg style="position:absolute;left:1222px;top:86px;overflow:visible;" width="18" height="18" viewBox="0 0 18 18"><rect x="1" y="1" width="16" height="16" fill="#98c0e8" stroke="#88a8c8"/><path d="M2 6 L8 12 L10 4 L16 12" stroke="#c8e0f4" fill="none" stroke-width="1.4"/></svg>
<svg style="position:absolute;left:1251px;top:86px;overflow:visible;" width="18" height="18" viewBox="0 0 18 18"><circle cx="5" cy="5" r="4" fill="#f0d030"/><path d="M2 11 L7 16 M7 11 L2 16" stroke="#c08080" stroke-width="1.4"/><path d="M12 1 L16 5 M16 1 L12 5" stroke="#60a060"/><path d="M9 5 L9 17 L11.5 14.5 L14 18 L15.5 17 L13 13.5 L16.5 13.5z" fill="#fff" stroke="#222" stroke-width="1"/></svg>
<svg style="position:absolute;left:1282px;top:86px;overflow:visible;" width="18" height="18" viewBox="0 0 18 18"><path d="M2 1 L2 13 L11 8z" fill="#dde4ec" stroke="#b0bcc8"/><path d="M10 14 h6 M13 11 v6" stroke="#a0aab8" stroke-width="1.4"/></svg>
<svg style="position:absolute;left:1311px;top:86px;overflow:visible;" width="18" height="18" viewBox="0 0 18 18"><path d="M1 2 v3 M1 5 h8 l-2 -2 M1 8 h16 v7 h-16z" stroke="#a0b8d8" fill="#c8d8ec"/></svg>
<div style="position:absolute;left:619px;top:87px;width:119px;height:17px;background:#dcdcdc;"></div>
<div style="position:absolute;left:738px;top:86px;width:18px;height:19px;background:#f8f8f8;"></div>
<svg style="position:absolute;left:744px;top:86px;overflow:visible;" width="18" height="18" viewBox="0 0 18 18"><path d="M2 8 h6 l-3 3z" fill="#111"/></svg>
<div class="t" style="left:620px;top:90px;font-size:13px;color:#222;font-weight:400;">Node</div>
<svg style="position:absolute;left:1px;top:113px;overflow:visible;" width="18" height="18" viewBox="0 0 18 18"><g fill="#3a3a3a"><rect x="2" y="1.4" width="1.8" height="1.8" rx="0.5"/><rect x="2" y="5.8999999999999995" width="1.8" height="1.8" rx="0.5"/><rect x="2" y="10.2" width="1.8" height="1.8" rx="0.5"/><rect x="2" y="14.6" width="1.8" height="1.8" rx="0.5"/></g></svg>
<svg style="position:absolute;left:13px;top:114px;overflow:visible;" width="16" height="16" viewBox="0 0 16 16"><circle cx="8" cy="8" r="8" fill="url(#gcircl)"/><path d="M3 8 l4 -3 v6z M8 8 l4 -3 v6z" fill="#d8ecf8"/></svg>
<svg style="position:absolute;left:43px;top:114px;overflow:visible;" width="16" height="16" viewBox="0 0 16 16"><circle cx="8" cy="8" r="8" fill="url(#gcircl)"/><path d="M4 8 l5 -4 v8z" fill="#d8ecf8"/><rect x="10" y="4" width="2" height="8" fill="#d8ecf8"/></svg>
<svg style="position:absolute;left:73px;top:114px;overflow:visible;" width="16" height="16" viewBox="0 0 16 16"><circle cx="8" cy="8" r="8" fill="url(#gcircl)"/><rect x="5" y="4" width="2" height="8" fill="#d8ecf8"/><rect x="9" y="4" width="2" height="8" fill="#d8ecf8"/></svg>
<svg style="position:absolute;left:102px;top:114px;overflow:visible;" width="16" height="16" viewBox="0 0 16 16"><circle cx="8" cy="8" r="8" fill="url(#gcirc)"/><rect x="4" y="4" width="2" height="8" fill="#e0f0ff"/><path d="M7 4 l6 4 l-6 4z" fill="#e0f0ff"/></svg>
<svg style="position:absolute;left:132px;top:114px;overflow:visible;" width="16" height="16" viewBox="0 0 16 16"><circle cx="8" cy="8" r="8" fill="url(#gcirc)"/><path d="M6 4 l6 4 l-6 4z" fill="#fff"/></svg>
<svg style="position:absolute;left:162px;top:114px;overflow:visible;" width="16" height="16" viewBox="0 0 16 16"><circle cx="8" cy="8" r="8" fill="url(#gcirc)"/><circle cx="8" cy="8" r="3" fill="#e02020"/></svg>
<svg style="position:absolute;left:191px;top:114px;overflow:visible;" width="16" height="16" viewBox="0 0 16 16"><circle cx="8" cy="8" r="8" fill="url(#gcirc)"/><path d="M4.5 7 a3.8 3.8 0 1 0 3 -3" fill="none" stroke="#e8f4ff" stroke-width="1.6"/><path d="M6 2 l3 2 l-3 2z" fill="#e8f4ff"/></svg>
<svg style="position:absolute;left:221px;top:114px;overflow:visible;" width="16" height="16" viewBox="0 0 16 16"><circle cx="8" cy="8" r="8" fill="url(#gcirc)"/><path d="M3 4 l5 4 l-5 4z M8 4 l5 4 l-5 4z" fill="#e0f0ff"/></svg>
<svg style="position:absolute;left:258px;top:114px;overflow:visible;" width="16" height="16" viewBox="0 0 16 16"><circle cx="8" cy="8" r="8" fill="#10407a"/><path d="M4 5 v6 M12 5 v6 M4 8 h8" stroke="#c8d8e8" stroke-width="1.6"/></svg>
<svg style="position:absolute;left:288px;top:114px;overflow:visible;" width="16" height="16" viewBox="0 0 16 16"><circle cx="8" cy="8" r="8" fill="url(#gcirc)"/><path d="M8 2 v12 M5 5 l3 -3 l3 3 M5 11 l3 3 l3 -3" stroke="#fff" stroke-width="1.6" fill="none"/></svg>
<svg style="position:absolute;left:317px;top:114px;overflow:visible;" width="16" height="16" viewBox="0 0 16 16"><circle cx="8" cy="8" r="8" fill="url(#gcircl)"/><path d="M8 3 v9 M5 9 l3 3 l3 -3" stroke="#d8ecf8" stroke-width="1.4" fill="none"/></svg>
<svg style="position:absolute;left:347px;top:114px;overflow:visible;" width="16" height="16" viewBox="0 0 16 16"><circle cx="8" cy="8" r="8" fill="#1850b0"/><path d="M3 2 L13 12 M12 3 L6 14" stroke="#c02050" stroke-width="1.6"/></svg>
<svg style="position:absolute;left:248px;top:114px;overflow:visible;" width="18" height="18" viewBox="0 0 18 18"><rect x="0" y="1" width="1" height="14" fill="#8aa0b0"/></svg>
<svg style="position:absolute;left:376px;top:113px;overflow:visible;" width="18" height="18" viewBox="0 0 18 18"><g fill="#3a3a3a"><rect x="2" y="1.4" width="1.8" height="1.8" rx="0.5"/><rect x="2" y="5.8999999999999995" width="1.8" height="1.8" rx="0.5"/><rect x="2" y="10.2" width="1.8" height="1.8" rx="0.5"/><rect x="2" y="14.6" width="1.8" height="1.8" rx="0.5"/></g></svg>
<div style="position:absolute;left:384px;top:111px;width:29px;height:23px;background:#e0eef4;border:1px solid #5a90a8;box-sizing:border-box;"></div>
<svg style="position:absolute;left:389px;top:113px;overflow:visible;" width="18" height="18" viewBox="0 0 18 18"><rect x="1" y="1" width="15" height="15" fill="#fff" stroke="#222" stroke-width="1.4"/><rect x="1" y="1" width="15" height="2" fill="#333"/><path d="M3 13 l3 -5 l3 3 l4 -6" stroke="#555" fill="none"/><path d="M9 6 L9 17 L11.5 14.5 L14 18 L15.5 17 L13 13.5 L16.5 13.5z" fill="#fff" stroke="#222" stroke-width="1"/></svg>
<svg style="position:absolute;left:420px;top:113px;overflow:visible;" width="18" height="18" viewBox="0 0 18 18"><rect x="1" y="1" width="14" height="14" fill="#fff" stroke="#223" stroke-width="1.2"/><path d="M1 5 h14 M1 9 h14 M5 1 v14 M10 1 v14" stroke="#2a4070" stroke-width="1.6"/><path d="M9 6 L9 17 L11.5 14.5 L14 18 L15.5 17 L13 13.5 L16.5 13.5z" fill="#fff" stroke="#222" stroke-width="1"/></svg>
<svg style="position:absolute;left:445px;top:114px;overflow:visible;" width="18" height="18" viewBox="0 0 18 18"><rect x="0" y="1" width="1" height="14" fill="#8aa0b0"/></svg>
<svg style="position:absolute;left:455px;top:113px;overflow:visible;" width="18" height="18" viewBox="0 0 18 18"><rect x="1" y="1" width="16" height="9" fill="#a8cce8" stroke="#80a8d0"/><path d="M2 3 l4 4 l4 -4 l4 4" stroke="#d0e4f4" fill="none"/><path d="M2 15 h14" stroke="#a0a0a8" stroke-width="2.4"/><circle cx="2" cy="15" r="2" fill="#a0a0a8"/><circle cx="16" cy="15" r="2" fill="#a0a0a8"/></svg>
<svg style="position:absolute;left:484px;top:113px;overflow:visible;" width="18" height="18" viewBox="0 0 18 18"><rect x="1" y="1" width="16" height="9" fill="#98b8e0" stroke="#80a0d0"/><path d="M1 5 h16 M6 1 v9 M12 1 v9" stroke="#d0e0f4"/><path d="M2 15 h14" stroke="#a0a0a8" stroke-width="2.4"/><circle cx="2" cy="15" r="2" fill="#a0a0a8"/><circle cx="16" cy="15" r="2" fill="#a0a0a8"/></svg>
<div style="position:absolute;left:0px;top:135px;width:321px;height:26px;background:linear-gradient(to bottom,#efefef 0px,#e6e6e6 8px,#e4e4e4 20px,#e8e8e8 26px);"></div>
<svg style="position:absolute;left:1px;top:140px;overflow:visible;" width="18" height="18" viewBox="0 0 18 18"><g fill="#3a3a3a"><rect x="2" y="1.4" width="1.8" height="1.8" rx="0.5"/><rect x="2" y="5.8999999999999995" width="1.8" height="1.8" rx="0.5"/><rect x="2" y="10.2" width="1.8" height="1.8" rx="0.5"/><rect x="2" y="14.6" width="1.8" height="1.8" rx="0.5"/></g></svg>
<div class="t" style="left:12px;top:144px;font-size:13.5px;color:#111;font-weight:700;">Database [2026.0]</div>
<div style="position:absolute;left:289px;top:144px;width:10px;height:10px;border:1.5px solid #999;box-sizing:border-box;"></div>
<svg style="position:absolute;left:304px;top:144px;overflow:visible;" width="11" height="11" viewBox="0 0 11 11"><path d="M1.5 1.5 L9.5 9.5 M9.5 1.5 L1.5 9.5" stroke="#111" stroke-width="1.8"/></svg>
<div style="position:absolute;left:0px;top:161px;width:321px;height:30px;background:#efefef;"></div>
<svg style="position:absolute;left:1px;top:167px;overflow:visible;" width="18" height="18" viewBox="0 0 18 18"><path d="M9 2 L3 8 h4 v9 h4 v-9 h4z" fill="#b8bcc0"/></svg>
<svg style="position:absolute;left:27px;top:167px;overflow:visible;" width="18" height="18" viewBox="0 0 18 18"><circle cx="8.5" cy="9" r="5.5" fill="none" stroke="#5a9a50" stroke-width="3.4"/><path d="M4 5 a5.5 5.5 0 0 1 6 -2" fill="none" stroke="#b0d8a8" stroke-width="1.4"/><path d="M13 13 a5.5 5.5 0 0 1 -6 2" fill="none" stroke="#2a5a2a" stroke-width="1.6"/></svg>
<svg style="position:absolute;left:52px;top:167px;overflow:visible;" width="18" height="18" viewBox="0 0 18 18"><rect x="2" y="2" width="14" height="14" fill="#e8e8e8" stroke="#888"/><path d="M5 5 h9 M5 8 h9 M5 11 h9 M5 14 h9" stroke="#666"/><rect x="3" y="4" width="1.5" height="1.5" fill="#333"/><rect x="3" y="7" width="1.5" height="1.5" fill="#333"/><rect x="3" y="10" width="1.5" height="1.5" fill="#333"/></svg>
<svg style="position:absolute;left:76px;top:167px;overflow:visible;" width="18" height="18" viewBox="0 0 18 18"><rect x="1" y="2" width="16" height="15" fill="#e8e8f0" stroke="#888"/><rect x="1" y="2" width="16" height="4" fill="#a0a0a8"/><rect x="11" y="2" width="6" height="4" fill="#d08040"/><rect x="3" y="9" width="3" height="3" fill="#3060c0"/><path d="M13 7 v9 M10 13 l3 3 l3 -3" stroke="#224" fill="none"/></svg>
<svg style="position:absolute;left:101px;top:167px;overflow:visible;" width="18" height="18" viewBox="0 0 18 18"><text x="1" y="9" font-size="9" font-weight="700" fill="#2040a0" font-family="Liberation Sans">A</text><text x="1" y="17" font-size="9" font-weight="700" fill="#e02020" font-family="Liberation Sans">Z</text><path d="M12 2 v14 M9 12 l3 4 l3 -4" stroke="#333" fill="none" stroke-width="1.3"/></svg>
<svg style="position:absolute;left:121px;top:167px;overflow:visible;" width="18" height="18" viewBox="0 0 18 18"><path d="M2 8 h6 l-3 3z" fill="#111"/></svg>
<svg style="position:absolute;left:134px;top:167px;overflow:visible;" width="18" height="18" viewBox="0 0 18 18"><rect x="1" y="8" width="7" height="9" rx="1.5" fill="#3a3a3a"/><rect x="10" y="8" width="7" height="9" rx="1.5" fill="#3a3a3a"/><rect x="2.5" y="2" width="4" height="7" rx="1" fill="#555"/><rect x="11.5" y="2" width="4" height="7" rx="1" fill="#555"/><rect x="6" y="7" width="6" height="4" fill="#444"/><rect x="2" y="10" width="2" height="5" fill="#8a8a8a"/><rect x="11" y="10" width="2" height="5" fill="#8a8a8a"/></svg>
<svg style="position:absolute;left:155px;top:167px;overflow:visible;" width="18" height="18" viewBox="0 0 18 18"><path d="M2 8 h6 l-3 3z" fill="#111"/></svg>
<svg style="position:absolute;left:173px;top:167px;overflow:visible;" width="18" height="18" viewBox="0 0 18 18"><rect x="1" y="2" width="15" height="12" fill="#f6f2e0" stroke="#333" stroke-width="1.2"/><rect x="1" y="2" width="15" height="3" fill="#3050b0"/><path d="M3 8 h11 M3 11 h8" stroke="#c8b890" stroke-width="0.8"/><rect x="10.5" y="11" width="3" height="6" rx="1" fill="#111"/><rect x="14" y="11" width="3" height="6" rx="1" fill="#111"/></svg>
<svg style="position:absolute;left:198px;top:167px;overflow:visible;" width="18" height="18" viewBox="0 0 18 18"><rect x="2" y="1" width="6" height="6" fill="#2040d0"/><rect x="9" y="10" width="7" height="7" fill="#4070e0"/><path d="M5 7 v6 h4" stroke="#555" fill="none"/></svg>
<div style="position:absolute;left:0px;top:190px;width:320px;height:2px;background:#8e8e8e;"></div>
<div style="position:absolute;left:0px;top:192px;width:320px;height:835px;background:#ffffff;"></div>
<div style="position:absolute;left:0px;top:192px;width:1px;height:835px;background:#c8ccd0;"></div>
<div style="position:absolute;left:320px;top:135px;width:9px;height:892px;background:#f6f6f8;"></div>
<div style="position:absolute;left:326px;top:135px;width:3px;height:892px;background:linear-gradient(to right,#b4ccd6,#cce8f4 40%,#cce6f2);"></div>
<div style="position:absolute;left:83px;top:491px;width:236px;height:20px;background:#eeeff3;"></div>
<div style="position:absolute;left:8px;top:238px;width:1px;height:452px;background:repeating-linear-gradient(to bottom,#a8a8a8 0 1px,transparent 1px 2px);"></div>
<div style="position:absolute;left:24px;top:258px;width:1px;height:412px;background:repeating-linear-gradient(to bottom,#a8a8a8 0 1px,transparent 1px 2px);"></div>
<div style="position:absolute;left:41px;top:362px;width:1px;height:203px;background:repeating-linear-gradient(to bottom,#a8a8a8 0 1px,transparent 1px 2px);"></div>
<div style="position:absolute;left:57px;top:383px;width:1px;height:119px;background:repeating-linear-gradient(to bottom,#a8a8a8 0 1px,transparent 1px 2px);"></div>
<div style="position:absolute;left:74px;top:404px;width:1px;height:14px;background:repeating-linear-gradient(to bottom,#a8a8a8 0 1px,transparent 1px 2px);"></div>
<div style="position:absolute;left:9px;top:690px;width:8px;height:1px;background:repeating-linear-gradient(to right,#a8a8a8 0 1px,transparent 1px 2px);"></div>
<div style="position:absolute;left:8px;top:250px;width:8px;height:1px;background:repeating-linear-gradient(to right,#a8a8a8 0 1px,transparent 1px 2px);"></div>
<div style="position:absolute;left:24px;top:271px;width:9px;height:1px;background:repeating-linear-gradient(to right,#a8a8a8 0 1px,transparent 1px 2px);"></div>
<div style="position:absolute;left:24px;top:292px;width:9px;height:1px;background:repeating-linear-gradient(to right,#a8a8a8 0 1px,transparent 1px 2px);"></div>
<div style="position:absolute;left:24px;top:313px;width:9px;height:1px;background:repeating-linear-gradient(to right,#a8a8a8 0 1px,transparent 1px 2px);"></div>
<div style="position:absolute;left:24px;top:334px;width:9px;height:1px;background:repeating-linear-gradient(to right,#a8a8a8 0 1px,transparent 1px 2px);"></div>
<div style="position:absolute;left:40px;top:355px;width:9px;height:1px;background:repeating-linear-gradient(to right,#a8a8a8 0 1px,transparent 1px 2px);"></div>
<div style="position:absolute;left:57px;top:376px;width:9px;height:1px;background:repeating-linear-gradient(to right,#a8a8a8 0 1px,transparent 1px 2px);"></div>
<div style="position:absolute;left:57px;top:397px;width:9px;height:1px;background:repeating-linear-gradient(to right,#a8a8a8 0 1px,transparent 1px 2px);"></div>
<div style="position:absolute;left:73px;top:418px;width:9px;height:1px;background:repeating-linear-gradient(to right,#a8a8a8 0 1px,transparent 1px 2px);"></div>
<div style="position:absolute;left:57px;top:438px;width:9px;height:1px;background:repeating-linear-gradient(to right,#a8a8a8 0 1px,transparent 1px 2px);"></div>
<div style="position:absolute;left:57px;top:459px;width:9px;height:1px;background:repeating-linear-gradient(to right,#a8a8a8 0 1px,transparent 1px 2px);"></div>
<div style="position:absolute;left:57px;top:480px;width:9px;height:1px;background:repeating-linear-gradient(to right,#a8a8a8 0 1px,transparent 1px 2px);"></div>
<div style="position:absolute;left:57px;top:501px;width:9px;height:1px;background:repeating-linear-gradient(to right,#a8a8a8 0 1px,transparent 1px 2px);"></div>
<div style="position:absolute;left:40px;top:522px;width:9px;height:1px;background:repeating-linear-gradient(to right,#a8a8a8 0 1px,transparent 1px 2px);"></div>
<div style="position:absolute;left:40px;top:543px;width:9px;height:1px;background:repeating-linear-gradient(to right,#a8a8a8 0 1px,transparent 1px 2px);"></div>
<div style="position:absolute;left:40px;top:564px;width:9px;height:1px;background:repeating-linear-gradient(to right,#a8a8a8 0 1px,transparent 1px 2px);"></div>
<div style="position:absolute;left:24px;top:585px;width:9px;height:1px;background:repeating-linear-gradient(to right,#a8a8a8 0 1px,transparent 1px 2px);"></div>
<div style="position:absolute;left:24px;top:606px;width:9px;height:1px;background:repeating-linear-gradient(to right,#a8a8a8 0 1px,transparent 1px 2px);"></div>
<div style="position:absolute;left:24px;top:627px;width:9px;height:1px;background:repeating-linear-gradient(to right,#a8a8a8 0 1px,transparent 1px 2px);"></div>
<div style="position:absolute;left:24px;top:648px;width:9px;height:1px;background:repeating-linear-gradient(to right,#a8a8a8 0 1px,transparent 1px 2px);"></div>
<div style="position:absolute;left:24px;top:668px;width:9px;height:1px;background:repeating-linear-gradient(to right,#a8a8a8 0 1px,transparent 1px 2px);"></div>
<div style="position:absolute;left:8px;top:689px;width:8px;height:1px;background:repeating-linear-gradient(to right,#a8a8a8 0 1px,transparent 1px 2px);"></div>
<div class="t" style="left:19.0px;top:222.5px;font-size:12.6px;color:#1e1e1e;font-weight:400;">Database [2026.0]</div>
<svg style="position:absolute;left:1.5px;top:221.5px;overflow:visible;" width="16" height="16" viewBox="0 0 16 16"><rect x="0.5" y="1" width="15" height="16" rx="4" fill="url(#gdb)"/><ellipse cx="8" cy="4" rx="6" ry="2" fill="#8ab0d8" opacity="0.7"/><circle cx="12.8" cy="13.5" r="2.4" fill="#e8e040"/></svg>
<div class="t" style="left:37.5px;top:243.4px;font-size:13px;color:#1e1e1e;font-weight:400;">Training</div>
<svg style="position:absolute;left:17.5px;top:242.4px;overflow:visible;" width="16" height="16" viewBox="0 0 16 16"><rect x="0.5" y="0.5" width="15" height="15" rx="2.5" fill="url(#gfold)"/><path d="M6 0.5 q-2 3.5 0.5 6.5 q2.5 3 1.5 8.5" fill="none" stroke="#1c4cb8" stroke-width="3.2"/><path d="M5.6 1 q-1.5 3.3 0.8 6" fill="none" stroke="#5a9ae0" stroke-width="1"/></svg>
<svg style="position:absolute;left:4px;top:246px;overflow:visible;" width="9" height="9" viewBox="0 0 9 9"><rect x="0.5" y="0.5" width="8" height="8" fill="#fff" stroke="#a8a8a8"/><path d="M2 4.5 h5" stroke="#555"/></svg>
<div class="t" style="left:53.9px;top:264.3px;font-size:13px;color:#1e1e1e;font-weight:400;">Water quality</div>
<svg style="position:absolute;left:33.9px;top:263.3px;overflow:visible;" width="16" height="16" viewBox="0 0 16 16"><rect x="0.5" y="0.5" width="15" height="15" rx="2.5" fill="url(#gfold)"/><path d="M6 0.5 q-2 3.5 0.5 6.5 q2.5 3 1.5 8.5" fill="none" stroke="#1c4cb8" stroke-width="3.2"/><path d="M5.6 1 q-1.5 3.3 0.8 6" fill="none" stroke="#5a9ae0" stroke-width="1"/></svg>
<svg style="position:absolute;left:20px;top:267px;overflow:visible;" width="9" height="9" viewBox="0 0 9 9"><rect x="0.5" y="0.5" width="8" height="8" fill="#fff" stroke="#a8a8a8"/><path d="M2 4.5 h5" stroke="#555"/><path d="M4.5 2 v5" stroke="#555"/></svg>
<div class="t" style="left:52.4px;top:285.2px;font-size:13px;color:#1e1e1e;font-weight:400;">1. Introduction course</div>
<svg style="position:absolute;left:33.9px;top:284.2px;overflow:visible;" width="16" height="16" viewBox="0 0 16 16"><rect x="0.5" y="0.5" width="15" height="15" rx="2.5" fill="url(#gfold)"/><path d="M6 0.5 q-2 3.5 0.5 6.5 q2.5 3 1.5 8.5" fill="none" stroke="#1c4cb8" stroke-width="3.2"/><path d="M5.6 1 q-1.5 3.3 0.8 6" fill="none" stroke="#5a9ae0" stroke-width="1"/></svg>
<svg style="position:absolute;left:20px;top:288px;overflow:visible;" width="9" height="9" viewBox="0 0 9 9"><rect x="0.5" y="0.5" width="8" height="8" fill="#fff" stroke="#a8a8a8"/><path d="M2 4.5 h5" stroke="#555"/><path d="M4.5 2 v5" stroke="#555"/></svg>
<div class="t" style="left:52.4px;top:306.1px;font-size:13px;color:#1e1e1e;font-weight:400;">2. Running Water Quality Simulations</div>
<svg style="position:absolute;left:33.9px;top:305.1px;overflow:visible;" width="16" height="16" viewBox="0 0 16 16"><rect x="0.5" y="0.5" width="15" height="15" rx="2.5" fill="url(#gfold)"/><path d="M6 0.5 q-2 3.5 0.5 6.5 q2.5 3 1.5 8.5" fill="none" stroke="#1c4cb8" stroke-width="3.2"/><path d="M5.6 1 q-1.5 3.3 0.8 6" fill="none" stroke="#5a9ae0" stroke-width="1"/></svg>
<svg style="position:absolute;left:20px;top:309px;overflow:visible;" width="9" height="9" viewBox="0 0 9 9"><rect x="0.5" y="0.5" width="8" height="8" fill="#fff" stroke="#a8a8a8"/><path d="M2 4.5 h5" stroke="#555"/><path d="M4.5 2 v5" stroke="#555"/></svg>
<div class="t" style="left:52.4px;top:327.0px;font-size:13px;color:#1e1e1e;font-weight:400;">3. Pollutant input sources</div>
<svg style="position:absolute;left:33.9px;top:326.0px;overflow:visible;" width="16" height="16" viewBox="0 0 16 16"><rect x="0.5" y="0.5" width="15" height="15" rx="2.5" fill="url(#gfold)"/><path d="M6 0.5 q-2 3.5 0.5 6.5 q2.5 3 1.5 8.5" fill="none" stroke="#1c4cb8" stroke-width="3.2"/><path d="M5.6 1 q-1.5 3.3 0.8 6" fill="none" stroke="#5a9ae0" stroke-width="1"/></svg>
<svg style="position:absolute;left:20px;top:330px;overflow:visible;" width="9" height="9" viewBox="0 0 9 9"><rect x="0.5" y="0.5" width="8" height="8" fill="#fff" stroke="#a8a8a8"/><path d="M2 4.5 h5" stroke="#555"/></svg>
<div class="t" style="left:70.3px;top:347.9px;font-size:13px;color:#1e1e1e;font-weight:400;">Wastewater and Trade Waste</div>
<svg style="position:absolute;left:50.3px;top:346.9px;overflow:visible;" width="16" height="16" viewBox="0 0 16 16"><rect x="0.5" y="0.5" width="15" height="15" rx="2.5" fill="url(#gfold)"/><path d="M6 0.5 q-2 3.5 0.5 6.5 q2.5 3 1.5 8.5" fill="none" stroke="#1c4cb8" stroke-width="3.2"/><path d="M5.6 1 q-1.5 3.3 0.8 6" fill="none" stroke="#5a9ae0" stroke-width="1"/></svg>
<svg style="position:absolute;left:36px;top:351px;overflow:visible;" width="9" height="9" viewBox="0 0 9 9"><rect x="0.5" y="0.5" width="8" height="8" fill="#fff" stroke="#a8a8a8"/><path d="M2 4.5 h5" stroke="#555"/></svg>
<div class="t" style="left:86.7px;top:368.8px;font-size:13px;color:#1e1e1e;font-weight:400;">wastewater and trade waste</div>
<svg style="position:absolute;left:66.7px;top:367.8px;overflow:visible;" width="16" height="16" viewBox="0 0 16 16"><rect x="0.5" y="0.5" width="15" height="15" rx="1.5" fill="url(#ggeo)" stroke="#d0c070" stroke-width="1"/><ellipse cx="4.6" cy="12.2" rx="1.8" ry="1.6" fill="#2a2010"/><ellipse cx="11" cy="9.3" rx="1.8" ry="1.6" fill="#2a2010"/><circle cx="7.2" cy="7.3" r="0.8" fill="#9a8a50"/><path d="M3.5 2.5 h1.5 v2 h-1.5" stroke="#a09060" stroke-width="0.8" fill="none"/></svg>
<div class="t" style="left:86.7px;top:389.7px;font-size:13px;color:#1e1e1e;font-weight:400;">Constant values</div>
<svg style="position:absolute;left:66.7px;top:388.7px;overflow:visible;" width="16" height="16" viewBox="0 0 16 16"><rect x="0.5" y="0.5" width="15" height="15" rx="2" fill="#48a038"/><rect x="1.5" y="1.5" width="13" height="13" rx="1.5" fill="#6ab850"/><path d="M4 9.5 a4.2 4.2 0 0 1 6.5 -5" fill="none" stroke="#f0fae8" stroke-width="1.8"/><path d="M12 6.5 a4.2 4.2 0 0 1 -6.5 5" fill="none" stroke="#f0fae8" stroke-width="1.8"/></svg>
<svg style="position:absolute;left:53px;top:393px;overflow:visible;" width="9" height="9" viewBox="0 0 9 9"><rect x="0.5" y="0.5" width="8" height="8" fill="#fff" stroke="#a8a8a8"/><path d="M2 4.5 h5" stroke="#555"/></svg>
<div class="t" style="left:103.1px;top:410.6px;font-size:13px;color:#1e1e1e;font-weight:400;">DWF</div>
<svg style="position:absolute;left:83.1px;top:409.6px;overflow:visible;" width="16" height="16" viewBox="0 0 16 16"><path d="M7.5 0 L15 7.5 L7.5 15 L0 7.5z" fill="#1c5a22"/><circle cx="7.5" cy="7.5" r="4.2" fill="#38b848"/><circle cx="7.5" cy="7.5" r="3" fill="none" stroke="#80e080" stroke-width="1"/><circle cx="7.5" cy="7.5" r="1.5" fill="#1c8a28"/></svg>
<div class="t" style="left:86.7px;top:431.5px;font-size:13px;color:#1e1e1e;font-weight:400;">Trade waste</div>
<svg style="position:absolute;left:66.7px;top:430.5px;overflow:visible;" width="16" height="16" viewBox="0 0 16 16"><path d="M0.5 8 L7.5 1.5 L15.5 7 L8.5 14z" fill="#8a5a2a"/><path d="M0.5 8 L8.5 14 L8.5 16 L1 10.5z" fill="#d8c8a8"/><path d="M8.5 14 L15.5 7 L15.5 9 L8.5 16z" fill="#b8a080"/><path d="M3 6 L10.5 11.8 M5.2 4 L12.8 9.8 M7.4 2.2 L14.5 7.8" stroke="#4a2a10" stroke-width="1.4"/></svg>
<div class="t" style="left:86.7px;top:452.4px;font-size:13px;color:#1e1e1e;font-weight:400;">Waste Water Time Varying</div>
<svg style="position:absolute;left:66.7px;top:451.4px;overflow:visible;" width="16" height="16" viewBox="0 0 16 16"><path d="M1.5 8 L6 11.5 L6 15.5 L1.5 12.8z" fill="#dfe4e6"/><path d="M1.5 12 L6 15.5 L8 15.8 L2 12z" fill="#9aa0a4"/><path d="M6 11.5 L10.5 6.5 L13.8 9.2 L13.8 13.5 L8.5 15.8 L6 15.5z" fill="#eef4fa"/><rect x="8.6" y="11.5" width="1.5" height="4" fill="#7a8288"/><path d="M0.8 6.8 L5.6 1.5 L10.8 5.2 L6 10.8z" fill="#3468b4"/><path d="M10.8 5.2 L14.5 8.6" stroke="#6a8098" stroke-width="1.3"/></svg>
<div class="t" style="left:86.7px;top:473.3px;font-size:13px;color:#1e1e1e;font-weight:400;">Waste water</div>
<svg style="position:absolute;left:66.7px;top:472.3px;overflow:visible;" width="16" height="16" viewBox="0 0 16 16"><path d="M1.5 8 L6 11.5 L6 15.5 L1.5 12.8z" fill="#dfe4e6"/><path d="M1.5 12 L6 15.5 L8 15.8 L2 12z" fill="#9aa0a4"/><path d="M6 11.5 L10.5 6.5 L13.8 9.2 L13.8 13.5 L8.5 15.8 L6 15.5z" fill="#eef4fa"/><rect x="8.6" y="11.5" width="1.5" height="4" fill="#7a8288"/><path d="M0.8 6.8 L5.6 1.5 L10.8 5.2 L6 10.8z" fill="#3468b4"/><path d="M10.8 5.2 L14.5 8.6" stroke="#6a8098" stroke-width="1.3"/></svg>
<div class="t" style="left:86.7px;top:494.2px;font-size:13px;color:#1e1e1e;font-weight:400;">Waste water!</div>
<svg style="position:absolute;left:66.7px;top:493.2px;overflow:visible;" width="16" height="16" viewBox="0 0 16 16"><path d="M1.5 8 L6 11.5 L6 15.5 L1.5 12.8z" fill="#dfe4e6"/><path d="M1.5 12 L6 15.5 L8 15.8 L2 12z" fill="#9aa0a4"/><path d="M6 11.5 L10.5 6.5 L13.8 9.2 L13.8 13.5 L8.5 15.8 L6 15.5z" fill="#eef4fa"/><rect x="8.6" y="11.5" width="1.5" height="4" fill="#7a8288"/><path d="M0.8 6.8 L5.6 1.5 L10.8 5.2 L6 10.8z" fill="#3468b4"/><path d="M10.8 5.2 L14.5 8.6" stroke="#6a8098" stroke-width="1.3"/></svg>
<div class="t" style="left:70.3px;top:515.1px;font-size:13px;color:#1e1e1e;font-weight:400;">Pollutographs</div>
<svg style="position:absolute;left:50.3px;top:514.1px;overflow:visible;" width="16" height="16" viewBox="0 0 16 16"><rect x="0.5" y="0.5" width="15" height="15" rx="2.5" fill="url(#gfold)"/><path d="M6 0.5 q-2 3.5 0.5 6.5 q2.5 3 1.5 8.5" fill="none" stroke="#1c4cb8" stroke-width="3.2"/><path d="M5.6 1 q-1.5 3.3 0.8 6" fill="none" stroke="#5a9ae0" stroke-width="1"/></svg>
<svg style="position:absolute;left:36px;top:518px;overflow:visible;" width="9" height="9" viewBox="0 0 9 9"><rect x="0.5" y="0.5" width="8" height="8" fill="#fff" stroke="#a8a8a8"/><path d="M2 4.5 h5" stroke="#555"/><path d="M4.5 2 v5" stroke="#555"/></svg>
<div class="t" style="left:68.8px;top:536.0px;font-size:13px;color:#1e1e1e;font-weight:400;">2D input sources</div>
<svg style="position:absolute;left:50.3px;top:535.0px;overflow:visible;" width="16" height="16" viewBox="0 0 16 16"><rect x="0.5" y="0.5" width="15" height="15" rx="2.5" fill="url(#gfold)"/><path d="M6 0.5 q-2 3.5 0.5 6.5 q2.5 3 1.5 8.5" fill="none" stroke="#1c4cb8" stroke-width="3.2"/><path d="M5.6 1 q-1.5 3.3 0.8 6" fill="none" stroke="#5a9ae0" stroke-width="1"/></svg>
<svg style="position:absolute;left:36px;top:539px;overflow:visible;" width="9" height="9" viewBox="0 0 9 9"><rect x="0.5" y="0.5" width="8" height="8" fill="#fff" stroke="#a8a8a8"/><path d="M2 4.5 h5" stroke="#555"/><path d="M4.5 2 v5" stroke="#555"/></svg>
<div class="t" style="left:70.3px;top:556.9px;font-size:13px;color:#1e1e1e;font-weight:400;">Washoff</div>
<svg style="position:absolute;left:50.3px;top:555.9px;overflow:visible;" width="16" height="16" viewBox="0 0 16 16"><rect x="0.5" y="0.5" width="15" height="15" rx="2.5" fill="url(#gfold)"/><path d="M6 0.5 q-2 3.5 0.5 6.5 q2.5 3 1.5 8.5" fill="none" stroke="#1c4cb8" stroke-width="3.2"/><path d="M5.6 1 q-1.5 3.3 0.8 6" fill="none" stroke="#5a9ae0" stroke-width="1"/></svg>
<svg style="position:absolute;left:36px;top:560px;overflow:visible;" width="9" height="9" viewBox="0 0 9 9"><rect x="0.5" y="0.5" width="8" height="8" fill="#fff" stroke="#a8a8a8"/><path d="M2 4.5 h5" stroke="#555"/><path d="M4.5 2 v5" stroke="#555"/></svg>
<div class="t" style="left:52.4px;top:577.8px;font-size:13px;color:#1e1e1e;font-weight:400;">4. Sediment</div>
<svg style="position:absolute;left:33.9px;top:576.8px;overflow:visible;" width="16" height="16" viewBox="0 0 16 16"><rect x="0.5" y="0.5" width="15" height="15" rx="2.5" fill="url(#gfold)"/><path d="M6 0.5 q-2 3.5 0.5 6.5 q2.5 3 1.5 8.5" fill="none" stroke="#1c4cb8" stroke-width="3.2"/><path d="M5.6 1 q-1.5 3.3 0.8 6" fill="none" stroke="#5a9ae0" stroke-width="1"/></svg>
<svg style="position:absolute;left:20px;top:581px;overflow:visible;" width="9" height="9" viewBox="0 0 9 9"><rect x="0.5" y="0.5" width="8" height="8" fill="#fff" stroke="#a8a8a8"/><path d="M2 4.5 h5" stroke="#555"/><path d="M4.5 2 v5" stroke="#555"/></svg>
<div class="t" style="left:52.4px;top:598.7px;font-size:13px;color:#1e1e1e;font-weight:400;">5. Conservative Pollutants</div>
<svg style="position:absolute;left:33.9px;top:597.7px;overflow:visible;" width="16" height="16" viewBox="0 0 16 16"><rect x="0.5" y="0.5" width="15" height="15" rx="2.5" fill="url(#gfold)"/><path d="M6 0.5 q-2 3.5 0.5 6.5 q2.5 3 1.5 8.5" fill="none" stroke="#1c4cb8" stroke-width="3.2"/><path d="M5.6 1 q-1.5 3.3 0.8 6" fill="none" stroke="#5a9ae0" stroke-width="1"/></svg>
<svg style="position:absolute;left:20px;top:602px;overflow:visible;" width="9" height="9" viewBox="0 0 9 9"><rect x="0.5" y="0.5" width="8" height="8" fill="#fff" stroke="#a8a8a8"/><path d="M2 4.5 h5" stroke="#555"/><path d="M4.5 2 v5" stroke="#555"/></svg>
<div class="t" style="left:52.4px;top:619.6px;font-size:13px;color:#1e1e1e;font-weight:400;">6. Non Conservative Pollutants</div>
<svg style="position:absolute;left:33.9px;top:618.6px;overflow:visible;" width="16" height="16" viewBox="0 0 16 16"><rect x="0.5" y="0.5" width="15" height="15" rx="2.5" fill="url(#gfold)"/><path d="M6 0.5 q-2 3.5 0.5 6.5 q2.5 3 1.5 8.5" fill="none" stroke="#1c4cb8" stroke-width="3.2"/><path d="M5.6 1 q-1.5 3.3 0.8 6" fill="none" stroke="#5a9ae0" stroke-width="1"/></svg>
<svg style="position:absolute;left:20px;top:623px;overflow:visible;" width="9" height="9" viewBox="0 0 9 9"><rect x="0.5" y="0.5" width="8" height="8" fill="#fff" stroke="#a8a8a8"/><path d="M2 4.5 h5" stroke="#555"/><path d="M4.5 2 v5" stroke="#555"/></svg>
<div class="t" style="left:52.4px;top:640.5px;font-size:13px;color:#1e1e1e;font-weight:400;">8. UPM</div>
<svg style="position:absolute;left:33.9px;top:639.5px;overflow:visible;" width="16" height="16" viewBox="0 0 16 16"><rect x="0.5" y="0.5" width="15" height="15" rx="2.5" fill="url(#gfold)"/><path d="M6 0.5 q-2 3.5 0.5 6.5 q2.5 3 1.5 8.5" fill="none" stroke="#1c4cb8" stroke-width="3.2"/><path d="M5.6 1 q-1.5 3.3 0.8 6" fill="none" stroke="#5a9ae0" stroke-width="1"/></svg>
<svg style="position:absolute;left:20px;top:644px;overflow:visible;" width="9" height="9" viewBox="0 0 9 9"><rect x="0.5" y="0.5" width="8" height="8" fill="#fff" stroke="#a8a8a8"/><path d="M2 4.5 h5" stroke="#555"/><path d="M4.5 2 v5" stroke="#555"/></svg>
<div class="t" style="left:52.4px;top:661.4px;font-size:13px;color:#1e1e1e;font-weight:400;">7. 2D simulation</div>
<svg style="position:absolute;left:33.9px;top:660.4px;overflow:visible;" width="16" height="16" viewBox="0 0 16 16"><rect x="0.5" y="0.5" width="15" height="15" rx="2.5" fill="url(#gfold)"/><path d="M6 0.5 q-2 3.5 0.5 6.5 q2.5 3 1.5 8.5" fill="none" stroke="#1c4cb8" stroke-width="3.2"/><path d="M5.6 1 q-1.5 3.3 0.8 6" fill="none" stroke="#5a9ae0" stroke-width="1"/></svg>
<svg style="position:absolute;left:20px;top:664px;overflow:visible;" width="9" height="9" viewBox="0 0 9 9"><rect x="0.5" y="0.5" width="8" height="8" fill="#fff" stroke="#a8a8a8"/><path d="M2 4.5 h5" stroke="#555"/><path d="M4.5 2 v5" stroke="#555"/></svg>
<div class="t" style="left:37.5px;top:682.3px;font-size:13px;color:#1e1e1e;font-weight:400;">Presentations</div>
<svg style="position:absolute;left:17.5px;top:681.3px;overflow:visible;" width="16" height="16" viewBox="0 0 16 16"><rect x="0.5" y="0.5" width="15" height="15" rx="2.5" fill="url(#gfold)"/><path d="M6 0.5 q-2 3.5 0.5 6.5 q2.5 3 1.5 8.5" fill="none" stroke="#1c4cb8" stroke-width="3.2"/><path d="M5.6 1 q-1.5 3.3 0.8 6" fill="none" stroke="#5a9ae0" stroke-width="1"/></svg>
<div class="t" style="left:19.0px;top:703.2px;font-size:13px;color:#1e1e1e;font-weight:400;">Recycle Bin (*)</div>
<svg style="position:absolute;left:1.5px;top:702.2px;overflow:visible;" width="16" height="16" viewBox="0 0 16 16"><rect x="3" y="3.5" width="10.5" height="13.5" rx="2" fill="#f2f2f2" stroke="#9a9a9a" stroke-width="1.3"/><rect x="5.5" y="6" width="5.5" height="9" fill="#e0e0e0"/><rect x="4" y="1.8" width="2.5" height="2" fill="#888"/><rect x="10" y="1.8" width="2.5" height="2" fill="#888"/></svg>
<div style="position:absolute;left:329px;top:135px;width:1380px;height:892px;background:#66808e;"></div>
<div style="position:absolute;left:331px;top:137px;width:1378px;height:888px;background:linear-gradient(to bottom,#f4f6f8 0px,#efefee 8px,#eeeeec 100%);"></div>
<div style="position:absolute;left:336px;top:168px;width:1373px;height:852px;background:#8c8c8c;"></div>
<div style="position:absolute;left:337px;top:170px;width:1372px;height:849px;background:#ffffff;"></div>
<div style="position:absolute;left:336px;top:167px;width:1373px;height:1px;background:#fafafa;"></div>
<svg style="position:absolute;left:342px;top:147px;overflow:visible;" width="16" height="16" viewBox="0 0 16 16"><rect x="0.5" y="0.5" width="15" height="15" rx="1.5" fill="url(#ggeo)" stroke="#d0c070" stroke-width="1"/><ellipse cx="4.6" cy="12.2" rx="1.8" ry="1.6" fill="#2a2010"/><ellipse cx="11" cy="9.3" rx="1.8" ry="1.6" fill="#2a2010"/><circle cx="7.2" cy="7.3" r="0.8" fill="#9a8a50"/><path d="M3.5 2.5 h1.5 v2 h-1.5" stroke="#a09060" stroke-width="0.8" fill="none"/></svg>
<div class="t" style="left:357px;top:150px;font-size:13px;color:#222;font-weight:400;width:227px;overflow:hidden;">wastewater and trade waste (version 15)</div>
<div style="position:absolute;left:584px;top:148px;width:1px;height:14px;background:#333;"></div>
<svg style="position:absolute;left:590px;top:147px;overflow:visible;" width="16" height="16" viewBox="0 0 16 16"><path d="M1.5 8 L6 11.5 L6 15.5 L1.5 12.8z" fill="#dfe4e6"/><path d="M1.5 12 L6 15.5 L8 15.8 L2 12z" fill="#9aa0a4"/><path d="M6 11.5 L10.5 6.5 L13.8 9.2 L13.8 13.5 L8.5 15.8 L6 15.5z" fill="#eef4fa"/><rect x="8.6" y="11.5" width="1.5" height="4" fill="#7a8288"/><path d="M0.8 6.8 L5.6 1.5 L10.8 5.2 L6 10.8z" fill="#3468b4"/><path d="M10.8 5.2 L14.5 8.6" stroke="#6a8098" stroke-width="1.3"/></svg>
<div class="t" style="left:607px;top:150px;font-size:13px;color:#222;font-weight:400;">omestic Waste Profile Editor (Waste water!) - 1 Example</div>
<div style="position:absolute;left:929px;top:148px;width:1px;height:14px;background:#333;"></div>
<div style="position:absolute;left:423px;top:255px;width:804px;height:601px;box-sizing:border-box;border:1px solid #858d96;border-bottom:1px solid #8a9096;border-radius:6px 6px 0 0;box-shadow:inset 0 1px 0 #e8ecf2;background:linear-gradient(to bottom,#c4cedb 0px,#cdd8e5 20px,#d5e0ec 36px,#d7e2ee 100%);"></div>
<svg style="position:absolute;left:435px;top:268px;overflow:visible;" width="16" height="16" viewBox="0 0 16 16"><path d="M1.5 8 L6 11.5 L6 15.5 L1.5 12.8z" fill="#dfe4e6"/><path d="M1.5 12 L6 15.5 L8 15.8 L2 12z" fill="#9aa0a4"/><path d="M6 11.5 L10.5 6.5 L13.8 9.2 L13.8 13.5 L8.5 15.8 L6 15.5z" fill="#eef4fa"/><rect x="8.6" y="11.5" width="1.5" height="4" fill="#7a8288"/><path d="M0.8 6.8 L5.6 1.5 L10.8 5.2 L6 10.8z" fill="#3468b4"/><path d="M10.8 5.2 L14.5 8.6" stroke="#6a8098" stroke-width="1.3"/></svg>
<div class="t" style="left:456px;top:271px;font-size:12.8px;color:#9eacbc;font-weight:400;">Domestic Waste Profile Editor (Waste water!) - 1 Example 1</div>
<div style="position:absolute;left:1107px;top:266px;width:33px;height:19px;box-sizing:border-box;border:1px solid #9aa6b6;border-radius:3px;background:linear-gradient(to bottom,#d0d8e4,#c8d2de);"></div>
<div style="position:absolute;left:1144px;top:266px;width:33px;height:19px;box-sizing:border-box;border:1px solid #9aa6b6;border-radius:3px;background:linear-gradient(to bottom,#d0d8e4,#c8d2de);"></div>
<div style="position:absolute;left:1182px;top:266px;width:33px;height:19px;box-sizing:border-box;border:1px solid #9aa6b6;border-radius:3px;background:linear-gradient(to bottom,#d0d8e4,#c8d2de);"></div>
<svg style="position:absolute;left:1118px;top:277px;overflow:visible;" width="12" height="5" viewBox="0 0 12 5"><rect x="0.5" y="0.5" width="11" height="4" rx="2" fill="#f4f6f8" stroke="#5c6470"/></svg>
<svg style="position:absolute;left:1154px;top:270px;overflow:visible;" width="12" height="10" viewBox="0 0 12 10"><rect x="0.5" y="0.5" width="11" height="9" rx="1.5" fill="#e8ecf0" stroke="#5c6470"/><rect x="3.5" y="3.5" width="5" height="3" fill="#fff" stroke="#5c6470" stroke-width="0.8"/></svg>
<svg style="position:absolute;left:1191px;top:270px;overflow:visible;" width="14" height="11" viewBox="0 0 14 11"><path d="M2 1 L12 10 M12 1 L2 10" stroke="#5c6470" stroke-width="3.6" stroke-linecap="round"/><path d="M2 1 L12 10 M12 1 L2 10" stroke="#f4f6f8" stroke-width="1.8" stroke-linecap="round"/></svg>
<div style="position:absolute;left:432px;top:290px;width:786px;height:556px;background:#eeeff2;border-left:2px solid #5a6570;border-top:2px solid #5a6570;border-bottom:1px solid #f4f8fa;box-sizing:border-box;"></div>
<div class="t" style="left:444px;top:315px;font-size:13px;color:#222;font-weight:400;">Descri</div>
<div style="position:absolute;left:445px;top:373px;width:60px;height:52px;border:1px solid #dcdcdc;border-right:none;box-sizing:border-box;"></div>
<div class="t" style="left:454px;top:367px;font-size:13px;color:#222;font-weight:400;background:#eeeff2;padding-right:2px">Flow</div>
<div style="position:absolute;left:445px;top:442px;width:60px;height:52px;border:1px solid #dcdcdc;border-right:none;box-sizing:border-box;"></div>
<div class="t" style="left:454px;top:436px;font-size:13px;color:#222;font-weight:400;background:#eeeff2;">Sedi</div>
<div style="position:absolute;left:461px;top:459px;width:30px;height:23px;background:#e4e4e4;border:1px solid #adadad;box-sizing:border-box;"></div>
<div class="t" style="left:465px;top:465px;font-size:13px;color:#222;font-weight:400;">Se</div>
<div style="position:absolute;left:445px;top:512px;width:60px;height:75px;border:1px solid #dcdcdc;border-right:none;box-sizing:border-box;"></div>
<div class="t" style="left:454px;top:506px;font-size:13px;color:#222;font-weight:400;background:#eeeff2;">Time</div>
<div class="t" style="left:454px;top:527px;font-size:13px;color:#222;font-weight:400;">Calib</div>
<div class="t" style="left:455px;top:556px;font-size:13px;color:#222;font-weight:400;">Desi</div>
<div class="t" style="left:458px;top:742px;font-size:13px;color:#222;font-weight:400;">Title</div>
<div style="position:absolute;left:435px;top:823px;width:50px;height:22px;background:#f4f5f6;border-top:1px solid #d8d8d8;box-sizing:border-box;"></div>
<div class="t" style="left:445px;top:828px;font-size:13px;color:#222;font-weight:400;">Comm</div>
<div style="position:absolute;left:478px;top:292px;width:1241px;height:645px;box-sizing:border-box;border:1px solid #7a8690;border-bottom:2px solid #8a9096;border-radius:6px 0 0 0;background:linear-gradient(to bottom,#bfccd8 0px,#c6d3de 16px,#d3dfe9 34px,#d8e3ec 100%);"></div>
<svg style="position:absolute;left:490px;top:305px;overflow:visible;" width="16" height="16" viewBox="0 0 16 16"><rect x="0.5" y="0.5" width="15" height="15" rx="1.5" fill="url(#ggeo)" stroke="#d0c070" stroke-width="1"/><ellipse cx="4.6" cy="12.2" rx="1.8" ry="1.6" fill="#2a2010"/><ellipse cx="11" cy="9.3" rx="1.8" ry="1.6" fill="#2a2010"/><circle cx="7.2" cy="7.3" r="0.8" fill="#9a8a50"/><path d="M3.5 2.5 h1.5 v2 h-1.5" stroke="#a09060" stroke-width="0.8" fill="none"/></svg>
<div class="t" style="left:511px;top:307px;font-size:12.8px;color:#98a5b2;font-weight:400;">GeoPlan - wastewater and trade waste (version 15) (R/O) - Constant values&gt;DWF&nbsp;&nbsp;[Target]</div>
<div style="position:absolute;left:487px;top:326px;width:1222px;height:600px;background:#ffffff;border-left:2px solid #5a6570;border-top:2px solid #5a6570;border-bottom:1px solid #eef4f4;box-sizing:border-box;"></div>
<div style="position:absolute;left:490px;top:330px;width:139px;height:18px;box-sizing:border-box;border:1px solid #9a9a9a;border-radius:7px;background:linear-gradient(to bottom,#fafafa,#e6e6e6);"></div>
<div class="t" style="left:494.5px;top:331.5px;font-size:14.2px;color:#2a2a2a;font-weight:400;">23/04/2025 00:00:00</div>
<div style="position:absolute;left:489px;top:350px;width:110px;height:88px;box-sizing:border-box;border:1px solid #6a7480;border-left-width:2px;background:linear-gradient(to bottom,#bfcdd9,#d3dee8 40%,#d8e2ec);"></div>
<div class="t" style="left:498px;top:365px;font-size:13px;color:#a0aebc;font-weight:400;">Locator</div>
<div style="position:absolute;left:569px;top:362px;width:18px;height:18px;background:#8d9caf;"></div>
<svg style="position:absolute;left:573px;top:366px;overflow:visible;" width="10" height="10" viewBox="0 0 10 10"><path d="M2 2 L8 8 M8 2 L2 8" stroke="#fff" stroke-width="1.6"/></svg>
<div style="position:absolute;left:498px;top:384px;width:92px;height:46px;background:#ffffff;"></div>
<svg style="position:absolute;left:498px;top:384px;overflow:visible;" width="92" height="46" viewBox="0 0 92 46"><ellipse cx="28" cy="31" rx="12" ry="14.5" fill="#c8c8c8" stroke="#b0b0b0"/><path d="M28 31 L49 20 L58 0" stroke="#909090" fill="none"/><rect x="86" y="0" width="2" height="45" fill="#e02020"/></svg>
<svg style="position:absolute;left:489px;top:328px;overflow:visible;" width="1220" height="597" viewBox="0 0 1220 597">
<circle cx="590" cy="398" r="173" fill="#c0be80" stroke="#8a9a30" stroke-width="1"/>
<polyline points="590,398 716,338 918,274 1041,28" fill="none" stroke="#98a850" stroke-width="1.3"/>
<circle cx="590" cy="398" r="4.5" fill="#80a800"/>
<circle cx="716" cy="338" r="5" fill="#80a800"/>
<circle cx="918" cy="274" r="5" fill="#80a800"/>
<circle cx="1041" cy="28" r="4.5" fill="#fff" stroke="#888" stroke-width="1.2"/>
</svg>
<div class="t" style="left:496px;top:902px;font-size:12px;color:#444;font-weight:400;">100 m</div>
<div style="position:absolute;left:496px;top:915px;width:94px;height:3px;background:#707070;"></div>
<div class="t" style="left:598px;top:902px;font-size:12px;color:#444;font-weight:400;">500 ft</div>
<div style="position:absolute;left:598px;top:915px;width:145px;height:3px;background:#707070;"></div>
<svg style="position:absolute;left:572px;top:748px;overflow:visible;" width="32" height="32" viewBox="0 0 32 32"><rect x="8" y="8.5" width="21" height="21" fill="#fff" stroke="#333" stroke-width="1.3"/><path d="M10 11 V27.5 H27" stroke="#999" fill="none" stroke-width="1.2"/><path d="M13.5 16.5 q2.5 -4 4.5 0.5 q2 5.5 3.5 3 q2 -5.5 4 -5.5 l1.5 1.5" stroke="#333" fill="none" stroke-width="1.2"/><path d="M2.2 1.6 L2.2 15.5 L5 12.8 L8.5 19.5 L11 18.5 L7.8 12 L12 12z" fill="#fff" stroke="#222" stroke-width="1.1"/></svg>
</body></html>
